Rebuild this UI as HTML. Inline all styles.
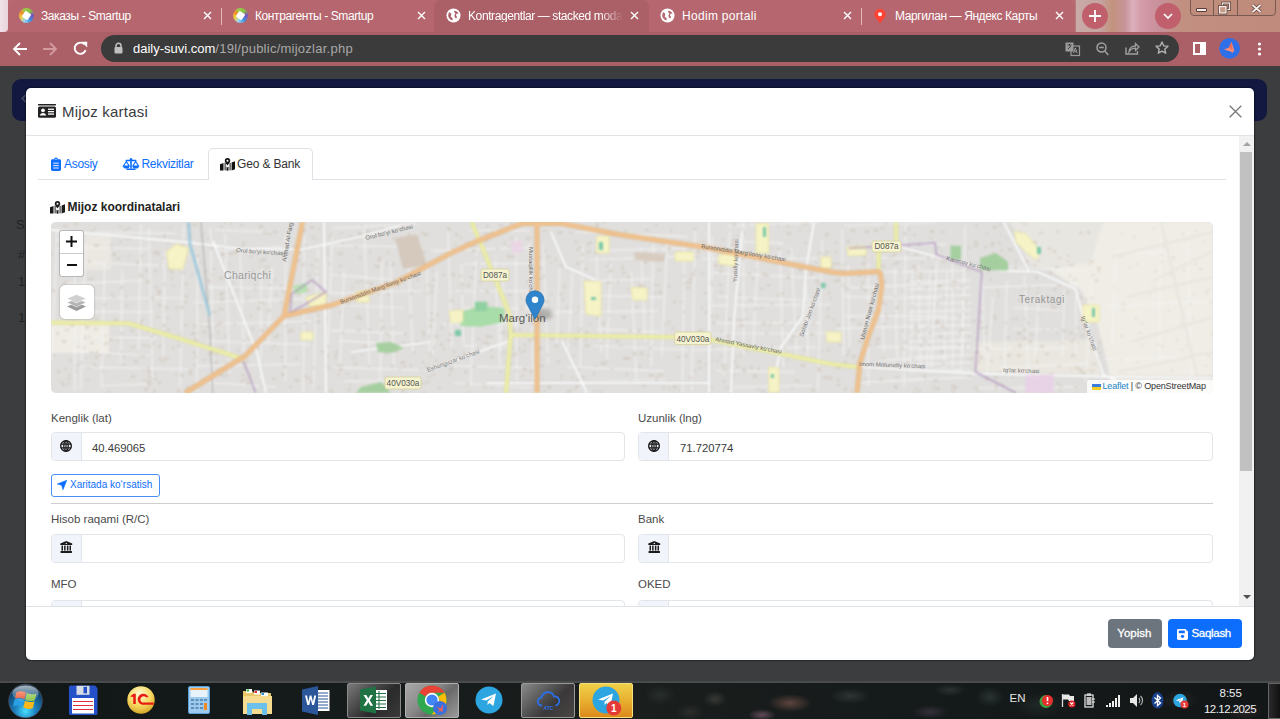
<!DOCTYPE html>
<html><head><meta charset="utf-8">
<style>
*{box-sizing:border-box;margin:0;padding:0}
html,body{width:1280px;height:719px;overflow:hidden;background:#3c3d3f;font-family:"Liberation Sans",sans-serif;position:relative}
.a{position:absolute}
.tx{position:absolute;white-space:nowrap;line-height:1}
svg{position:absolute;overflow:visible}
/* chrome */
#tabstrip{left:8px;top:0;width:1067px;height:32px;background:#b5666e;border-radius:10px 10px 0 0}
#theme{left:0;top:0;width:1280px;height:32px;background:linear-gradient(90deg,#b86a72 0%,#b86a72 84%,#c8aaa8 84.1%,#c6a4a0 85.9%,#c2927e 86.9%,#c8949a 87.9%,#dcb0bc 88.5%,#d49aa8 89.2%,#c8909a 90.6%,#c29080 92.2%,#c08a7c 100%)}
#toolbar{left:0;top:32px;width:1280px;height:34px;background:#ab6068}
.tabt{color:#fff;font-size:12px;letter-spacing:-0.4px}
#omni{left:101px;top:35px;width:1078px;height:27px;border-radius:14px;background:#3b3b3b}
/* page */
#navy{left:12px;top:79px;width:1255px;height:42px;border-radius:9px;background:#121840}
/* modal */
#modal{left:26px;top:88px;width:1228px;height:572px;background:#fff;border-radius:5px;overflow:hidden;box-shadow:0 0 0 1px rgba(0,0,0,.22),0 0 0 2px rgba(0,0,0,.08)}
#taskbar{left:0;top:683px;width:1280px;height:36px;background:linear-gradient(90deg,#111617 0%,#161b1b 30%,#1a1e1d 50%,#151a1a 70%,#121617 100%)}
.lbl{font-size:11.5px;color:#4a4a4a}
.val{font-size:11.3px;color:#3a3a3a}
.ig{position:absolute;height:29px;border:1px solid #e2e5e9;border-radius:4px;background:#fff;overflow:hidden}
.ig .ad{position:absolute;left:0;top:0;width:30px;height:27px;background:#f1f4fb;border-right:1px solid #e2e5e9}
</style></head><body>
<!-- ============ CHROME ============ -->
<div id="theme" class="a"></div>
<div class="a" style="left:0;top:0;width:8px;height:31.5px;background:linear-gradient(90deg,#f0e2e8,#e8d4da);border-radius:0 0 4px 0"></div>
<div id="tabstrip" class="a"></div>
<div id="toolbar" class="a"></div>
<!-- active tab (3) -->
<div class="a" style="left:434px;top:0;width:215px;height:32px;background:#ab6068;border-radius:7px 7px 0 0"></div>
<!-- separators -->
<div class="a" style="left:221px;top:8px;width:1px;height:17px;background:#e0b8bc"></div>
<div class="a" style="left:861px;top:8px;width:1px;height:17px;background:#e0b8bc"></div>

<!-- tab1 -->
<div class="a" style="left:18.5px;top:8px;width:15px;height:15px;border-radius:50%;background:conic-gradient(from -20deg,#9acd4a 0deg,#8ac040 60deg,#7a50c0 110deg,#3d8ee0 160deg,#9ad4f5 220deg,#f0d040 270deg,#f08a2a 320deg,#9acd4a 360deg)"></div><div class="a" style="left:22.5px;top:12px;width:7px;height:7px;background:#fff;transform:rotate(35deg);border-radius:1px"></div>
<div class="tx tabt" style="left:41px;top:10px">Заказы - Smartup</div>
<svg style="left:203px;top:11px" width="9" height="9" viewBox="0 0 9 9"><path d="M1 1l7 7M8 1L1 8" stroke="#fff" stroke-width="1.4"/></svg>
<!-- tab2 -->
<div class="a" style="left:232.5px;top:8px;width:15px;height:15px;border-radius:50%;background:conic-gradient(from -20deg,#9acd4a 0deg,#8ac040 60deg,#7a50c0 110deg,#3d8ee0 160deg,#9ad4f5 220deg,#f0d040 270deg,#f08a2a 320deg,#9acd4a 360deg)"></div><div class="a" style="left:236.5px;top:12px;width:7px;height:7px;background:#fff;transform:rotate(35deg);border-radius:1px"></div>
<div class="tx tabt" style="left:255px;top:10px">Контрагенты - Smartup</div>
<svg style="left:417px;top:11px" width="9" height="9" viewBox="0 0 9 9"><path d="M1 1l7 7M8 1L1 8" stroke="#fff" stroke-width="1.4"/></svg>
<!-- tab3 -->
<svg style="left:446px;top:8px" width="15" height="15" viewBox="0 0 16 16">
 <circle cx="8" cy="8" r="7.5" fill="#fff"/>
 <path d="M3.2 4.5c1.2.3 2.2 1 2.4 2.1.2 1-.8 1.5-.4 2.6.4.9 1.6.8 1.9 1.8.2.7-.1 1.6-.4 2.2-2.2-.6-3.9-2.5-4.4-4.8.1-1.4.4-2.8.9-3.9zM9.6 2.8c1.6.4 3 1.4 3.8 2.8-.9.7-2.2.4-2.7 1.4-.4 1 .8 1.7.9 2.7.1.7-.4 1.4-1.1 1.6-.6-1-1.5-1.8-1.5-3.1 0-1.1 1.1-1.6.8-2.6-.3-.9-1.2-1-1.4-1.8.3-.5.7-.8 1.2-1z" fill="#ab6068"/>
</svg>
<div class="tx tabt" style="left:468px;top:10px;width:155px;overflow:hidden;-webkit-mask-image:linear-gradient(90deg,#000 85%,transparent)">Kontragentlar — stacked modal</div>
<svg style="left:630px;top:11px" width="9" height="9" viewBox="0 0 9 9"><path d="M1 1l7 7M8 1L1 8" stroke="#fff" stroke-width="1.4"/></svg>
<!-- tab4 -->
<svg style="left:660px;top:8px" width="15" height="15" viewBox="0 0 16 16">
 <circle cx="8" cy="8" r="7.5" fill="#fff"/>
 <path d="M3.2 4.5c1.2.3 2.2 1 2.4 2.1.2 1-.8 1.5-.4 2.6.4.9 1.6.8 1.9 1.8.2.7-.1 1.6-.4 2.2-2.2-.6-3.9-2.5-4.4-4.8.1-1.4.4-2.8.9-3.9zM9.6 2.8c1.6.4 3 1.4 3.8 2.8-.9.7-2.2.4-2.7 1.4-.4 1 .8 1.7.9 2.7.1.7-.4 1.4-1.1 1.6-.6-1-1.5-1.8-1.5-3.1 0-1.1 1.1-1.6.8-2.6-.3-.9-1.2-1-1.4-1.8.3-.5.7-.8 1.2-1z" fill="#b5666e"/>
</svg>
<div class="tx tabt" style="left:682px;top:10px;letter-spacing:0.3px">Hodim portali</div>
<svg style="left:843px;top:11px" width="9" height="9" viewBox="0 0 9 9"><path d="M1 1l7 7M8 1L1 8" stroke="#fff" stroke-width="1.4"/></svg>
<!-- tab5 -->
<svg style="left:873px;top:8px" width="14" height="16" viewBox="0 0 14 16">
 <path d="M7 .8a5.6 5.6 0 0 0-5.6 5.6c0 3.2 3.6 5.8 5.6 9 2-3.2 5.6-5.8 5.6-9A5.6 5.6 0 0 0 7 .8z" fill="#f43" />
 <circle cx="7" cy="6.3" r="2" fill="#fff"/>
</svg>
<div class="tx tabt" style="left:895px;top:10px">Маргилан — Яндекс Карты</div>
<svg style="left:1055px;top:11px" width="9" height="9" viewBox="0 0 9 9"><path d="M1 1l7 7M8 1L1 8" stroke="#fff" stroke-width="1.4"/></svg>
<!-- new tab + dropdown -->
<div class="a" style="left:1082px;top:3px;width:26px;height:26px;border-radius:13px;background:#c0606c"></div>
<svg style="left:1089px;top:10px" width="12" height="12" viewBox="0 0 12 12"><path d="M6 0v12M0 6h12" stroke="#fff" stroke-width="1.8"/></svg>
<div class="a" style="left:1155px;top:3px;width:26px;height:26px;border-radius:13px;background:#c0606c"></div>
<svg style="left:1163px;top:13px" width="10" height="6" viewBox="0 0 10 6"><path d="M1 1l4 4 4-4" stroke="#fff" stroke-width="1.6" fill="none"/></svg>
<!-- window controls -->
<div class="a" style="left:1189.5px;top:-3px;width:86px;height:18.5px;border:1px solid #7a5a50;border-radius:0 0 4px 4px;background:rgba(190,140,120,.3)"></div>
<div class="a" style="left:1213px;top:0;width:1px;height:15px;background:#7a5a50"></div>
<div class="a" style="left:1236.5px;top:0;width:1px;height:15px;background:#7a5a50"></div>
<div class="a" style="left:1196px;top:7.5px;width:11px;height:4px;background:#f4ece8;border:1px solid #5a3a34;border-radius:1px"></div>
<svg style="left:1218px;top:2px" width="13" height="12" viewBox="0 0 13 12"><rect x="4.5" y="1" width="7" height="6.5" fill="none" stroke="#4a302a" stroke-width="2.6"/><rect x="4.5" y="1" width="7" height="6.5" fill="none" stroke="#f4ece8" stroke-width="1.3"/><rect x="1.5" y="4.5" width="6.5" height="6.5" fill="#c89a88" stroke="#4a302a" stroke-width="2.6"/><rect x="1.5" y="4.5" width="6.5" height="6.5" fill="#c89a88" stroke="#f4ece8" stroke-width="1.3"/></svg>
<svg style="left:1251px;top:3.5px" width="11" height="9" viewBox="0 0 11 9"><path d="M1.5 1l8 7M9.5 1l-8 7" stroke="#5a3a34" stroke-width="3.4"/><path d="M1.5 1l8 7M9.5 1l-8 7" stroke="#f4ece8" stroke-width="2"/></svg>

<!-- toolbar icons -->
<svg style="left:12px;top:41px" width="16" height="16" viewBox="0 0 16 16"><path d="M15 8H2.5M8 2L2 8l6 6" stroke="#fff" stroke-width="1.8" fill="none"/></svg>
<svg style="left:42px;top:41px" width="16" height="16" viewBox="0 0 16 16"><path d="M1 8h12.5M8 2l6 6-6 6" stroke="#d39aa0" stroke-width="1.8" fill="none"/></svg>
<svg style="left:73px;top:41px" width="15" height="15" viewBox="0 0 15 15"><path d="M12.6 9.2A5.6 5.6 0 1 1 11.3 3.3" stroke="#fff" stroke-width="1.9" fill="none"/><path d="M8.6 .8h5.6v5.6z" fill="#fff"/></svg>
<div id="omni" class="a"></div>
<svg style="left:114px;top:42px" width="9" height="12" viewBox="0 0 9 12"><path d="M2 5.5V3.8a2.5 2.5 0 0 1 5 0v1.7" stroke="#c0c0c0" stroke-width="1.5" fill="none"/><rect x="0.5" y="5" width="8" height="6.5" rx="1" fill="#c0c0c0"/></svg>
<div class="tx" style="left:133px;top:42px;font-size:13px;color:#fff">daily-suvi.com<span style="color:#a9a9a9;letter-spacing:.25px">/19l/public/mijozlar.php</span></div>
<!-- right omnibox icons -->
<svg style="left:1065px;top:42px" width="15" height="14" viewBox="0 0 15 14"><rect x="0.5" y="0.5" width="8" height="9" fill="#9a9a9a"/><rect x="6" y="4" width="8.5" height="9.5" fill="none" stroke="#9a9a9a" stroke-width="1.2"/><path d="M2.5 3h4M4.5 2v1.5M3 7l3-3" stroke="#3b3b3b" stroke-width="1"/><path d="M8.5 11l1.8-5 1.8 5M9.2 9.3h2.3" stroke="#9a9a9a" stroke-width="1" fill="none"/></svg>
<svg style="left:1096px;top:42px" width="13" height="14" viewBox="0 0 13 14"><circle cx="5.5" cy="5.5" r="4.5" stroke="#a0a0a0" stroke-width="1.5" fill="none"/><path d="M3.2 5.5h4.6M8.8 9l3.5 4" stroke="#a0a0a0" stroke-width="1.5"/></svg>
<svg style="left:1125px;top:42px" width="15" height="13" viewBox="0 0 15 13"><path d="M1 5.5V12h11.5V9" stroke="#a0a0a0" stroke-width="1.4" fill="none"/><path d="M4 10c0-4 3-6 6.5-6V1.5L14 5l-3.5 3.5V6.2C7.5 6.2 5.5 7.5 4 10z" stroke="#a0a0a0" stroke-width="1.3" fill="none"/></svg>
<svg style="left:1155px;top:41px" width="14" height="14" viewBox="0 0 14 14"><path d="M7 1l1.8 3.9 4.2.4-3.2 2.8.9 4.1L7 10.1 3.3 12.2l.9-4.1L1 5.3l4.2-.4z" stroke="#b0b0b0" stroke-width="1.4" fill="none" stroke-linejoin="round"/></svg>
<svg style="left:1193px;top:42px" width="13" height="13" viewBox="0 0 13 13"><rect x="1" y="1" width="11" height="11" fill="none" stroke="#fff" stroke-width="2"/><rect x="7" y="1" width="5" height="11" fill="#fff"/></svg>
<svg style="left:1219px;top:38px" width="21" height="21" viewBox="0 0 21 21"><circle cx="10.6" cy="10.4" r="10.4" fill="#2f6fe8"/><path d="M12.5 3.8L10 9.5 5 11.6l6.5 1.9 2.2 1.2 1.6-2.3z" fill="#f58a78"/><path d="M12.5 3.8L10 9.5l3.5 2.5z" fill="#ee6a5a"/></svg>
<svg style="left:1257px;top:42px" width="5" height="14" viewBox="0 0 5 14"><circle cx="2.5" cy="2" r="1.6" fill="#fff"/><circle cx="2.5" cy="7" r="1.6" fill="#fff"/><circle cx="2.5" cy="12" r="1.6" fill="#fff"/></svg>

<!-- ============ PAGE (behind backdrop) ============ -->
<div id="navy" class="a"></div>
<svg style="left:21px;top:93.5px" width="6" height="9" viewBox="0 0 6 9"><path d="M5 .8L1.2 4.5 5 8.2" stroke="#4a4e64" stroke-width="1.6" fill="none"/></svg>
<div class="tx" style="left:16px;top:218px;font-size:13px;color:#222">S</div>
<div class="tx" style="left:18px;top:248px;font-size:13px;color:#222">#</div>
<div class="tx" style="left:18px;top:275px;font-size:13px;color:#222">1</div>
<div class="tx" style="left:18px;top:311px;font-size:13px;color:#222">1</div>

<!-- ============ MODAL ============ -->

<div id="modal" class="a"></div>
<!-- header -->
<svg style="left:38px;top:104px" width="18" height="14" viewBox="0 0 18 14">
 <rect x="0" y="0" width="18" height="1.6" rx=".5" fill="#222"/>
 <rect x="0" y="2.6" width="18" height="11.2" rx="1.6" fill="#222"/>
 <circle cx="5" cy="6.3" r="1.9" fill="#fff"/>
 <path d="M1.8 11.6c.3-1.7 1.6-2.6 3.2-2.6s2.9.9 3.2 2.6z" fill="#fff"/>
 <rect x="10" y="4.6" width="6" height="1.3" fill="#fff"/><rect x="10" y="7" width="6" height="1.3" fill="#fff"/><rect x="10" y="9.4" width="6" height="1.3" fill="#fff"/>
</svg>
<div class="tx" style="left:62px;top:104.2px;font-size:15px;letter-spacing:.2px;color:#3a3b3c">Mijoz kartasi</div>
<svg style="left:1229px;top:105px" width="13" height="13" viewBox="0 0 13 13"><path d="M.7 .7l11.6 11.6M12.3 .7L.7 12.3" stroke="#767676" stroke-width="1.3"/></svg>
<div class="a" style="left:26px;top:135px;width:1228px;height:1px;background:#dfe3e8"></div>

<!-- scroll body clip -->
<div class="a" style="left:0;top:0;width:1280px;height:719px;clip-path:inset(136px 41px 113px 26px)">
 <!-- nav tabs -->
 <div class="a" style="left:38px;top:179px;width:1188px;height:1px;background:#dee2e6"></div>
 <div class="a" style="left:207.5px;top:148px;width:105px;height:32px;background:#fff;border:1px solid #dee2e6;border-bottom:0;border-radius:5px 5px 0 0"></div>
 <svg style="left:51px;top:157.5px" width="10" height="13" viewBox="0 0 10 13"><path d="M3.2 1.2a1.8 1.8 0 0 1 3.6 0H8.6A1.4 1.4 0 0 1 10 2.6v9A1.4 1.4 0 0 1 8.6 13H1.4A1.4 1.4 0 0 1 0 11.6v-9A1.4 1.4 0 0 1 1.4 1.2z" fill="#0d6efd"/><path d="M2.2 5.2h5.6M2.2 7.6h5.6M2.2 10h5.6" stroke="#fff" stroke-width=".9"/><circle cx="5" cy="1.4" r=".6" fill="#fff"/></svg>
 <div class="tx" style="left:64px;top:158.3px;font-size:12px;letter-spacing:-.3px;color:#0d6efd">Asosiy</div>
 <svg style="left:123px;top:158px" width="16" height="12" viewBox="0 0 16 12"><rect x="7.2" y="1.5" width="1.6" height="9" fill="#0d6efd"/><rect x="2.5" y="1.8" width="11" height="1.5" rx=".7" fill="#0d6efd"/><circle cx="8" cy="1.2" r="1.2" fill="#0d6efd"/><rect x="3.5" y="10.5" width="9" height="1.5" rx=".5" fill="#0d6efd"/><path d="M3.3 3.5L.4 8h5.8zM12.7 3.5L9.8 8h5.8z" fill="none" stroke="#0d6efd" stroke-width="1.1"/><path d="M.2 8h6.2a3.1 2.6 0 0 1-6.2 0zM9.6 8h6.2a3.1 2.6 0 0 1-6.2 0z" fill="#0d6efd"/></svg>
 <div class="tx" style="left:141.5px;top:158.3px;font-size:12px;letter-spacing:-.3px;color:#0d6efd">Rekvizitlar</div>
 <svg style="left:219.5px;top:157.5px" width="15" height="12.5" viewBox="0 0 15 12.5"><path d="M0 6.2l3.5-1.3v7.6L0 12.5zM4.6 4.6l1 .3v7.6l-1-.3zM9.6 5l1-.3v7.5l-1 .3zM11.6 4.5L15 3.3v7.9l-3.4 1.3z" fill="#111"/><path d="M7.5 0a2.7 2.7 0 0 0-2.7 2.7c0 1.8 2.7 4.6 2.7 4.6s2.7-2.8 2.7-4.6A2.7 2.7 0 0 0 7.5 0z" fill="#111"/><circle cx="7.5" cy="2.7" r="1" fill="#fff"/><path d="M6.5 8.5l1 1 1-1v4l-1 .3-1-.3z" fill="#111"/></svg>
 <div class="tx" style="left:237px;top:158.4px;font-size:12px;letter-spacing:-.15px;color:#333">Geo &amp; Bank</div>

 <!-- section title -->
 <svg style="left:50px;top:200.5px" width="15" height="12.5" viewBox="0 0 15 12.5"><path d="M0 6.2l3.5-1.3v7.6L0 12.5zM4.6 4.6l1 .3v7.6l-1-.3zM9.6 5l1-.3v7.5l-1 .3zM11.6 4.5L15 3.3v7.9l-3.4 1.3z" fill="#1a1a1a"/><path d="M7.5 0a2.7 2.7 0 0 0-2.7 2.7c0 1.8 2.7 4.6 2.7 4.6s2.7-2.8 2.7-4.6A2.7 2.7 0 0 0 7.5 0z" fill="#1a1a1a"/><circle cx="7.5" cy="2.7" r="1" fill="#fff"/><path d="M6.5 8.5l1 1 1-1v4l-1 .3-1-.3z" fill="#1a1a1a"/></svg>
 <div class="tx" style="left:67.4px;top:201.2px;font-size:12px;font-weight:bold;color:#222">Mijoz koordinatalari</div>

 <!-- MAP -->
 <div class="a" id="map" style="left:51px;top:222px;width:1162px;height:171px;border-radius:5px;overflow:hidden;background:#e0dfdd">
<div class="a" style="left:0;top:0;width:1162px;height:171px;filter:blur(.8px)"><svg style="left:0;top:0" width="1162" height="171" viewBox="0 0 1162 171">
<defs><filter id="bl" x="-50%" y="-50%" width="200%" height="200%"><feGaussianBlur stdDeviation="2"/></filter></defs>
<rect width="1162" height="171" fill="#e0dfdd"/>
<path d="M1052.0 0.0 L1162.0 0.0 L1162.0 171.0 L1062.0 171.0 L1055.0 135.0 L1046.0 100.0 L1030.0 68.0 L1005.0 52.0 L985.0 40.0 L965.0 10.0 L960.0 0.0Z" fill="#f0ede6"/>
<path d="M960.0 0.0 L1052.0 0.0 L1040.0 40.0 L1000.0 48.0 L978.0 42.0Z" fill="#e8e6e1"/>
<path d="M924.0 120.0 L1045.0 118.0 L1052.0 153.0 L924.0 152.0Z" fill="#eae7e0"/>
<path d="M0.0 103.0 L58.0 103.0 L58.0 131.0 L0.0 131.0Z" fill="#efece5"/>
<path d="M34.0 9.0 L60.0 9.0 L60.0 48.0 L34.0 48.0Z" fill="#ebe8e2"/>
<path d="M6.1 7.7L1.0 137.6M23.7 18.8L23.8 168.0M34.6 22.2L29.7 167.4M53.7 42.4L50.4 164.6M71.2 48.6L69.9 141.4M90.0 2.4L87.5 127.0M97.8 6.0L101.6 155.2M113.7 29.8L112.2 138.2M132.7 3.2L129.1 167.9M21.0 10.4L124.6 11.3M14.7 25.2L101.1 27.2M28.1 40.1L114.3 43.9M14.1 62.2L92.0 58.4M37.1 76.1L132.6 76.0M32.7 89.3L102.5 90.1M15.4 115.0L105.9 115.9M22.4 129.1L98.8 133.5M32.5 145.1L137.0 147.1M48.7 164.0L99.7 161.8" stroke="#f4f4f4" stroke-width="1.2" fill="none" opacity="0.9"/>
<path d="M146.5 34.3L146.0 169.8M159.5 6.0L162.7 168.0M174.2 12.7L178.6 150.9M188.7 23.0L193.3 142.8M210.4 44.3L209.4 156.7M221.2 45.4L217.0 121.9M234.6 11.9L234.4 159.0M253.3 13.5L252.3 170.8M163.8 8.0L220.0 9.9M165.9 28.7L231.6 24.2M172.8 52.1L223.3 55.0M156.8 65.3L255.7 66.6M142.8 80.5L251.2 77.1M142.2 102.7L260.0 99.2M155.3 119.0L258.9 122.7M146.2 143.8L249.4 142.3M145.2 160.0L224.3 164.9" stroke="#f4f4f4" stroke-width="1.2" fill="none" opacity="0.9"/>
<path d="M267.2 24.8L262.4 166.6M281.1 13.6L277.0 128.5M293.2 48.8L289.0 143.9M312.9 1.4L318.6 143.9M330.8 35.7L329.2 157.6M339.5 39.6L342.9 143.7M356.0 11.4L361.8 129.4M375.7 41.4L378.6 129.0M281.7 6.4L365.1 1.7M271.7 23.1L369.1 25.0M278.8 52.7L340.6 57.6M275.3 71.7L370.7 69.0M268.6 82.0L353.8 86.0M280.1 108.4L352.6 111.4M287.7 118.8L341.8 121.6M280.1 145.4L372.5 148.2M293.6 159.6L339.2 158.5" stroke="#f4f4f4" stroke-width="1.2" fill="none" opacity="0.9"/>
<path d="M385.9 48.6L381.9 133.8M397.0 7.8L400.7 124.6M410.5 42.4L412.4 120.7M425.5 28.1L419.6 164.3M443.8 33.3L449.0 144.0M452.8 44.7L449.3 128.6M464.7 15.0L465.7 158.7M478.1 21.5L483.0 164.3M492.2 23.5L497.0 141.1M418.5 8.6L478.9 8.9M380.8 28.8L481.5 25.6M413.6 41.8L492.8 41.6M403.4 69.1L486.3 69.3M412.9 86.1L495.5 86.7M391.6 101.6L467.6 101.7M411.9 124.2L461.7 123.6M401.2 143.8L478.5 145.7M402.4 161.0L479.9 165.4" stroke="#f4f4f4" stroke-width="1.2" fill="none" opacity="0.9"/>
<path d="M508.7 45.0L505.8 122.7M521.5 48.4L517.1 127.9M531.8 22.7L528.7 167.3M545.4 34.3L550.2 130.8M560.1 36.7L555.8 137.1M580.2 49.6L585.6 159.7M590.1 25.0L594.1 120.2M602.2 22.1L600.2 144.5M616.4 16.3L610.7 134.0M633.5 22.6L631.4 170.1M525.1 9.8L636.8 14.7M547.6 28.6L634.9 26.3M538.2 38.0L626.7 34.3M544.7 59.1L599.9 56.6M545.0 73.4L612.0 75.4M502.8 89.8L606.3 89.1M546.0 106.8L608.9 109.8M542.0 124.0L636.7 127.6M516.6 144.9L612.9 149.1M506.3 160.1L614.2 157.5" stroke="#f4f4f4" stroke-width="1.2" fill="none" opacity="0.9"/>
<path d="M644.1 8.3L640.6 168.4M661.6 15.6L659.1 132.0M678.9 9.1L673.1 153.2M692.1 0.8L692.7 133.4M707.1 24.4L702.4 123.1M728.5 22.2L732.5 145.6M740.1 26.0L745.9 135.7M755.2 42.7L756.8 134.7M771.3 17.8L766.9 168.2M676.3 3.8L767.5 0.4M681.2 19.4L737.3 21.1M651.9 36.8L765.6 36.4M661.8 51.2L767.1 55.8M666.8 74.4L768.0 79.0M657.5 83.7L779.9 82.5M664.6 100.8L770.2 100.9M652.9 112.0L775.6 111.0M641.1 127.9L765.1 125.2M665.9 148.5L743.2 150.1M683.1 165.2L760.9 163.5" stroke="#f4f4f4" stroke-width="1.2" fill="none" opacity="0.9"/>
<path d="M791.1 7.7L792.8 133.9M797.2 42.9L798.7 125.2M817.0 41.7L817.2 163.9M829.0 42.8L833.0 129.7M843.7 45.8L846.0 136.0M854.7 1.6L853.1 164.2M867.7 42.9L869.2 142.3M886.1 34.9L880.1 145.9M901.5 38.4L901.9 145.2M914.3 3.4L911.4 133.2M793.0 3.5L884.3 0.5M827.8 23.4L895.8 22.3M813.5 35.4L882.4 36.6M783.8 51.1L912.8 48.6M794.9 66.2L892.2 61.3M793.2 74.6L887.1 76.5M794.3 94.1L894.7 93.8M785.8 106.6L876.2 103.6M825.9 125.2L919.1 124.8M827.4 138.1L898.0 135.8M826.3 147.1L909.7 148.0M805.7 160.8L873.3 157.1" stroke="#f4f4f4" stroke-width="1.2" fill="none" opacity="0.9"/>
<path d="M931.2 60.0L933.7 136.1M941.8 75.3L936.1 151.9M955.8 59.3L953.4 153.3M973.4 53.5L977.5 158.6M988.3 69.5L983.7 138.0M1013.5 68.0L1011.0 135.6M1024.4 55.4L1025.4 131.7M1040.5 56.8L1035.1 160.2M958.0 44.9L1037.0 49.2M932.1 65.3L1026.8 62.2M963.5 85.4L1009.8 88.5M961.6 107.0L1007.2 107.5M922.3 126.7L1016.7 126.2M949.3 145.8L1037.0 141.3M925.8 166.4L1028.5 164.9" stroke="#f4f4f4" stroke-width="1.2" fill="none" opacity="0.9"/>
<path d="M1064.1 37.9L1061.3 120.9M1109.5 15.4L1108.2 142.4M1135.9 8.3L1140.8 160.3M1058.6 28.4L1126.5 33.4M1055.5 83.8L1154.5 79.7M1053.6 137.1L1152.6 134.7" stroke="#f4f4f4" stroke-width="1.2" fill="none" opacity="0.9"/>
<path d="M858 60.0L920 58.0M858 67.5L920 65.5M858 75.0L920 73.0M858 82.5L920 80.5M858 90.0L920 88.0M858 97.5L920 95.5M858 105.0L920 103.0M858 112.5L920 110.5M858 120.0L920 118.0M858 127.5L920 125.5M858 135.0L920 133.0M858 142.5L920 140.5M858 150.0L920 148.0M858 157.5L920 155.5" stroke="#f6f6f6" stroke-width="1.1" fill="none"/>
<path d="M862.0 50L859.0 150M879.0 50L876.0 150M896.0 50L893.0 150M913.0 50L910.0 150" stroke="#f6f6f6" stroke-width="1" fill="none" opacity=".8"/>
<g fill="#c9b8aa" opacity=".4"><rect x="598" y="152" width="4" height="3"/><rect x="402" y="128" width="2" height="3"/><rect x="284" y="129" width="3" height="3"/><rect x="603" y="62" width="4" height="2"/><rect x="97" y="153" width="3" height="3"/><rect x="678" y="74" width="3" height="2"/><rect x="134" y="73" width="3" height="3"/><rect x="0" y="67" width="4" height="3"/><rect x="1021" y="42" width="2" height="2"/><rect x="162" y="89" width="4" height="2"/><rect x="989" y="123" width="4" height="3"/><rect x="89" y="133" width="2" height="2"/><rect x="244" y="157" width="4" height="3"/><rect x="1011" y="107" width="4" height="3"/><rect x="734" y="19" width="2" height="3"/><rect x="551" y="100" width="3" height="3"/><rect x="235" y="103" width="2" height="3"/><rect x="1046" y="48" width="3" height="2"/><rect x="499" y="40" width="2" height="2"/><rect x="1009" y="120" width="3" height="2"/><rect x="23" y="85" width="4" height="3"/><rect x="85" y="39" width="3" height="3"/><rect x="238" y="6" width="3" height="3"/><rect x="380" y="68" width="2" height="3"/><rect x="776" y="86" width="2" height="3"/><rect x="1018" y="53" width="2" height="2"/><rect x="488" y="45" width="3" height="2"/><rect x="1000" y="85" width="2" height="2"/><rect x="509" y="156" width="2" height="2"/><rect x="968" y="9" width="2" height="2"/><rect x="436" y="121" width="2" height="3"/><rect x="472" y="122" width="3" height="2"/><rect x="1047" y="159" width="3" height="2"/><rect x="195" y="160" width="4" height="3"/><rect x="33" y="114" width="3" height="3"/><rect x="1034" y="76" width="2" height="2"/><rect x="82" y="14" width="3" height="2"/><rect x="589" y="130" width="3" height="3"/><rect x="807" y="53" width="3" height="2"/><rect x="52" y="81" width="3" height="3"/><rect x="203" y="62" width="3" height="2"/><rect x="663" y="42" width="4" height="3"/><rect x="43" y="6" width="2" height="2"/><rect x="270" y="128" width="4" height="3"/><rect x="381" y="57" width="4" height="2"/><rect x="275" y="123" width="3" height="3"/><rect x="312" y="123" width="4" height="2"/><rect x="25" y="40" width="3" height="3"/><rect x="1002" y="66" width="3" height="3"/><rect x="856" y="23" width="3" height="2"/><rect x="9" y="159" width="3" height="2"/><rect x="638" y="56" width="3" height="3"/><rect x="380" y="134" width="2" height="2"/><rect x="411" y="27" width="3" height="2"/><rect x="682" y="82" width="4" height="3"/><rect x="169" y="73" width="2" height="2"/><rect x="278" y="14" width="2" height="3"/><rect x="523" y="121" width="3" height="2"/><rect x="246" y="71" width="4" height="2"/><rect x="785" y="145" width="4" height="2"/><rect x="819" y="50" width="3" height="3"/><rect x="392" y="126" width="2" height="3"/><rect x="260" y="42" width="2" height="3"/><rect x="928" y="99" width="3" height="2"/><rect x="416" y="170" width="4" height="2"/><rect x="682" y="17" width="3" height="2"/><rect x="107" y="81" width="2" height="3"/><rect x="960" y="7" width="3" height="2"/><rect x="125" y="32" width="4" height="2"/><rect x="977" y="64" width="2" height="3"/><rect x="633" y="133" width="4" height="2"/><rect x="111" y="102" width="4" height="3"/><rect x="229" y="63" width="2" height="2"/><rect x="214" y="44" width="4" height="2"/><rect x="855" y="140" width="3" height="3"/><rect x="194" y="53" width="2" height="2"/><rect x="835" y="94" width="2" height="3"/><rect x="106" y="68" width="4" height="2"/><rect x="671" y="16" width="2" height="3"/><rect x="730" y="70" width="3" height="3"/><rect x="439" y="9" width="4" height="3"/><rect x="435" y="3" width="3" height="2"/><rect x="410" y="69" width="2" height="3"/><rect x="947" y="72" width="2" height="3"/><rect x="607" y="62" width="2" height="2"/><rect x="16" y="94" width="4" height="3"/><rect x="93" y="106" width="3" height="2"/><rect x="153" y="48" width="4" height="2"/><rect x="972" y="19" width="3" height="2"/><rect x="317" y="143" width="2" height="3"/><rect x="330" y="104" width="4" height="3"/><rect x="91" y="122" width="4" height="2"/><rect x="672" y="146" width="4" height="3"/><rect x="645" y="34" width="3" height="2"/><rect x="594" y="7" width="4" height="2"/><rect x="403" y="21" width="2" height="2"/><rect x="43" y="96" width="4" height="2"/><rect x="701" y="55" width="3" height="3"/><rect x="578" y="107" width="3" height="3"/><rect x="324" y="43" width="3" height="3"/><rect x="469" y="75" width="2" height="2"/><rect x="650" y="84" width="2" height="3"/><rect x="802" y="133" width="3" height="2"/><rect x="851" y="68" width="2" height="2"/><rect x="377" y="62" width="3" height="2"/><rect x="43" y="22" width="4" height="3"/><rect x="817" y="87" width="2" height="3"/><rect x="685" y="134" width="2" height="2"/><rect x="1046" y="125" width="2" height="2"/><rect x="138" y="151" width="3" height="2"/><rect x="720" y="123" width="2" height="2"/><rect x="875" y="104" width="3" height="2"/><rect x="340" y="105" width="3" height="2"/><rect x="267" y="165" width="3" height="2"/><rect x="621" y="105" width="2" height="3"/><rect x="391" y="34" width="3" height="2"/><rect x="668" y="48" width="3" height="3"/><rect x="177" y="134" width="2" height="2"/><rect x="668" y="62" width="3" height="2"/><rect x="265" y="92" width="3" height="3"/><rect x="278" y="169" width="4" height="2"/><rect x="378" y="131" width="3" height="2"/><rect x="186" y="127" width="2" height="3"/><rect x="861" y="43" width="4" height="3"/><rect x="770" y="128" width="2" height="2"/><rect x="306" y="107" width="3" height="3"/><rect x="940" y="23" width="2" height="2"/><rect x="23" y="0" width="3" height="3"/><rect x="112" y="61" width="2" height="3"/><rect x="613" y="101" width="2" height="3"/><rect x="655" y="81" width="2" height="2"/><rect x="983" y="42" width="2" height="3"/><rect x="101" y="109" width="4" height="3"/><rect x="422" y="45" width="2" height="2"/><rect x="677" y="96" width="3" height="3"/><rect x="632" y="89" width="3" height="2"/><rect x="173" y="0" width="2" height="2"/><rect x="426" y="41" width="2" height="2"/><rect x="13" y="94" width="2" height="2"/><rect x="434" y="89" width="4" height="3"/><rect x="854" y="30" width="3" height="2"/><rect x="315" y="8" width="4" height="3"/><rect x="751" y="1" width="3" height="3"/><rect x="85" y="112" width="2" height="2"/><rect x="1046" y="45" width="4" height="2"/><rect x="129" y="152" width="4" height="3"/><rect x="747" y="45" width="4" height="3"/><rect x="720" y="157" width="3" height="3"/><rect x="674" y="165" width="2" height="2"/><rect x="924" y="3" width="3" height="2"/><rect x="884" y="35" width="2" height="3"/><rect x="202" y="66" width="4" height="2"/><rect x="398" y="146" width="4" height="3"/><rect x="496" y="91" width="2" height="2"/><rect x="459" y="124" width="4" height="3"/><rect x="829" y="67" width="4" height="2"/><rect x="593" y="29" width="2" height="2"/><rect x="117" y="106" width="2" height="3"/><rect x="1026" y="120" width="2" height="2"/><rect x="145" y="110" width="2" height="2"/><rect x="774" y="11" width="4" height="3"/><rect x="209" y="163" width="4" height="2"/><rect x="924" y="129" width="4" height="3"/><rect x="112" y="35" width="2" height="2"/><rect x="36" y="145" width="4" height="2"/><rect x="866" y="108" width="3" height="3"/><rect x="105" y="17" width="4" height="2"/><rect x="309" y="58" width="3" height="2"/><rect x="368" y="159" width="2" height="3"/><rect x="956" y="132" width="4" height="3"/><rect x="894" y="106" width="2" height="3"/><rect x="33" y="89" width="2" height="3"/><rect x="492" y="8" width="4" height="2"/><rect x="750" y="142" width="4" height="3"/><rect x="179" y="0" width="2" height="3"/><rect x="800" y="167" width="2" height="3"/><rect x="515" y="84" width="2" height="3"/><rect x="622" y="164" width="4" height="3"/><rect x="607" y="27" width="2" height="2"/><rect x="523" y="19" width="4" height="2"/><rect x="515" y="169" width="4" height="2"/><rect x="659" y="61" width="3" height="3"/><rect x="936" y="127" width="3" height="2"/><rect x="391" y="52" width="3" height="2"/><rect x="398" y="151" width="2" height="3"/><rect x="133" y="102" width="4" height="2"/><rect x="366" y="56" width="2" height="3"/><rect x="695" y="127" width="2" height="3"/><rect x="461" y="132" width="4" height="2"/><rect x="132" y="79" width="4" height="2"/><rect x="533" y="46" width="4" height="2"/><rect x="760" y="167" width="4" height="3"/><rect x="633" y="60" width="2" height="3"/><rect x="1004" y="44" width="4" height="2"/><rect x="173" y="113" width="2" height="3"/><rect x="159" y="25" width="3" height="3"/><rect x="457" y="34" width="4" height="2"/><rect x="295" y="151" width="3" height="2"/><rect x="13" y="146" width="3" height="2"/><rect x="526" y="108" width="3" height="2"/><rect x="149" y="103" width="3" height="2"/><rect x="778" y="155" width="3" height="3"/><rect x="888" y="114" width="4" height="2"/><rect x="714" y="110" width="3" height="3"/><rect x="329" y="107" width="2" height="3"/><rect x="255" y="68" width="4" height="2"/><rect x="263" y="72" width="3" height="2"/><rect x="653" y="70" width="4" height="2"/><rect x="939" y="56" width="2" height="3"/><rect x="873" y="155" width="2" height="2"/><rect x="264" y="37" width="4" height="2"/><rect x="545" y="17" width="4" height="3"/><rect x="568" y="123" width="4" height="2"/><rect x="671" y="142" width="4" height="3"/><rect x="431" y="162" width="2" height="2"/><rect x="412" y="130" width="2" height="3"/><rect x="669" y="43" width="3" height="3"/><rect x="65" y="13" width="3" height="3"/><rect x="609" y="19" width="3" height="3"/><rect x="987" y="90" width="2" height="3"/><rect x="485" y="28" width="2" height="2"/><rect x="493" y="96" width="2" height="2"/><rect x="371" y="109" width="3" height="3"/><rect x="1046" y="130" width="4" height="2"/><rect x="819" y="80" width="2" height="3"/><rect x="739" y="118" width="3" height="2"/><rect x="506" y="138" width="3" height="3"/><rect x="257" y="52" width="3" height="3"/><rect x="450" y="109" width="4" height="3"/><rect x="160" y="52" width="3" height="2"/><rect x="90" y="97" width="3" height="2"/><rect x="557" y="59" width="4" height="2"/><rect x="690" y="36" width="2" height="3"/><rect x="263" y="17" width="2" height="2"/><rect x="195" y="77" width="2" height="2"/><rect x="949" y="135" width="2" height="2"/><rect x="702" y="153" width="4" height="3"/><rect x="207" y="118" width="4" height="2"/><rect x="779" y="75" width="2" height="2"/><rect x="278" y="40" width="2" height="3"/><rect x="518" y="10" width="3" height="2"/><rect x="735" y="42" width="2" height="2"/><rect x="168" y="55" width="4" height="3"/><rect x="699" y="144" width="3" height="3"/><rect x="440" y="164" width="2" height="2"/><rect x="669" y="109" width="2" height="2"/><rect x="640" y="117" width="3" height="2"/><rect x="536" y="83" width="2" height="2"/><rect x="224" y="71" width="2" height="3"/><rect x="99" y="113" width="3" height="3"/><rect x="817" y="95" width="2" height="3"/><rect x="457" y="72" width="4" height="2"/><rect x="868" y="50" width="3" height="3"/><rect x="350" y="168" width="4" height="3"/><rect x="1024" y="112" width="2" height="3"/><rect x="202" y="122" width="2" height="2"/><rect x="823" y="7" width="4" height="3"/><rect x="573" y="8" width="3" height="2"/><rect x="7" y="32" width="3" height="2"/><rect x="828" y="156" width="4" height="3"/><rect x="648" y="107" width="4" height="2"/><rect x="223" y="114" width="3" height="2"/><rect x="106" y="31" width="2" height="3"/><rect x="813" y="156" width="4" height="2"/><rect x="387" y="141" width="3" height="3"/><rect x="906" y="32" width="2" height="3"/><rect x="21" y="97" width="4" height="2"/><rect x="523" y="89" width="2" height="3"/><rect x="604" y="157" width="3" height="2"/><rect x="15" y="66" width="4" height="2"/><rect x="499" y="71" width="2" height="2"/><rect x="677" y="36" width="2" height="2"/><rect x="448" y="2" width="4" height="2"/><rect x="1036" y="147" width="2" height="2"/><rect x="135" y="3" width="4" height="2"/><rect x="473" y="127" width="2" height="3"/><rect x="813" y="122" width="2" height="2"/><rect x="308" y="95" width="3" height="3"/><rect x="703" y="152" width="2" height="2"/><rect x="12" y="3" width="4" height="2"/><rect x="408" y="53" width="4" height="2"/><rect x="1006" y="143" width="4" height="2"/><rect x="332" y="162" width="4" height="3"/><rect x="493" y="28" width="2" height="3"/><rect x="1002" y="28" width="3" height="3"/><rect x="405" y="134" width="3" height="3"/><rect x="307" y="10" width="4" height="3"/><rect x="913" y="124" width="2" height="2"/><rect x="631" y="53" width="3" height="2"/><rect x="396" y="117" width="4" height="2"/><rect x="848" y="48" width="2" height="3"/><rect x="276" y="72" width="4" height="2"/><rect x="303" y="24" width="4" height="2"/><rect x="288" y="146" width="4" height="3"/><rect x="364" y="15" width="4" height="3"/><rect x="837" y="34" width="4" height="2"/><rect x="325" y="10" width="3" height="3"/><rect x="744" y="158" width="4" height="2"/><rect x="831" y="79" width="2" height="3"/><rect x="811" y="40" width="4" height="3"/><rect x="929" y="89" width="3" height="2"/><rect x="199" y="33" width="2" height="3"/><rect x="381" y="97" width="3" height="2"/><rect x="259" y="158" width="3" height="3"/><rect x="910" y="64" width="3" height="2"/><rect x="164" y="102" width="3" height="3"/><rect x="545" y="4" width="2" height="2"/><rect x="1040" y="148" width="3" height="2"/><rect x="275" y="133" width="3" height="2"/><rect x="994" y="131" width="4" height="2"/><rect x="267" y="6" width="2" height="2"/><rect x="397" y="5" width="2" height="3"/><rect x="914" y="78" width="2" height="3"/><rect x="968" y="121" width="2" height="3"/><rect x="335" y="40" width="2" height="3"/><rect x="192" y="145" width="3" height="2"/><rect x="1041" y="38" width="2" height="3"/><rect x="988" y="10" width="4" height="2"/><rect x="879" y="8" width="4" height="3"/><rect x="59" y="25" width="2" height="2"/><rect x="711" y="51" width="4" height="3"/><rect x="796" y="18" width="3" height="3"/><rect x="270" y="21" width="3" height="3"/><rect x="177" y="41" width="2" height="2"/><rect x="491" y="156" width="2" height="2"/><rect x="974" y="38" width="4" height="3"/><rect x="933" y="24" width="3" height="2"/><rect x="972" y="66" width="2" height="2"/><rect x="475" y="58" width="2" height="3"/><rect x="121" y="63" width="3" height="2"/><rect x="773" y="31" width="3" height="2"/><rect x="461" y="26" width="3" height="3"/><rect x="259" y="4" width="4" height="3"/><rect x="351" y="29" width="3" height="2"/><rect x="334" y="154" width="2" height="2"/><rect x="1028" y="10" width="4" height="2"/><rect x="588" y="143" width="2" height="3"/><rect x="793" y="166" width="3" height="3"/><rect x="1048" y="158" width="2" height="3"/><rect x="304" y="153" width="2" height="3"/><rect x="152" y="109" width="3" height="3"/><rect x="536" y="76" width="4" height="3"/><rect x="195" y="74" width="3" height="2"/><rect x="291" y="31" width="2" height="2"/><rect x="747" y="34" width="2" height="2"/><rect x="934" y="125" width="3" height="2"/><rect x="216" y="105" width="4" height="2"/><rect x="612" y="35" width="2" height="3"/><rect x="883" y="157" width="4" height="3"/><rect x="352" y="144" width="3" height="2"/><rect x="16" y="156" width="3" height="2"/><rect x="916" y="46" width="2" height="3"/><rect x="39" y="120" width="4" height="2"/><rect x="374" y="159" width="4" height="2"/><rect x="127" y="122" width="3" height="3"/><rect x="605" y="154" width="3" height="2"/><rect x="1002" y="85" width="4" height="2"/><rect x="557" y="92" width="2" height="2"/><rect x="1016" y="38" width="2" height="2"/><rect x="108" y="43" width="2" height="2"/><rect x="101" y="120" width="2" height="3"/><rect x="19" y="102" width="4" height="3"/><rect x="549" y="120" width="2" height="3"/><rect x="913" y="123" width="2" height="3"/><rect x="129" y="84" width="4" height="3"/><rect x="116" y="21" width="2" height="2"/><rect x="904" y="25" width="4" height="3"/><rect x="784" y="28" width="2" height="3"/><rect x="729" y="102" width="4" height="2"/><rect x="415" y="161" width="3" height="3"/><rect x="421" y="143" width="4" height="3"/><rect x="885" y="97" width="3" height="3"/><rect x="890" y="9" width="4" height="2"/><rect x="1006" y="160" width="2" height="3"/><rect x="696" y="2" width="2" height="2"/><rect x="73" y="74" width="4" height="2"/><rect x="237" y="72" width="3" height="3"/><rect x="665" y="138" width="2" height="2"/><rect x="909" y="106" width="4" height="3"/><rect x="660" y="138" width="2" height="2"/><rect x="263" y="89" width="3" height="2"/><rect x="998" y="49" width="3" height="3"/><rect x="680" y="21" width="4" height="3"/><rect x="89" y="101" width="2" height="3"/><rect x="130" y="22" width="3" height="3"/><rect x="606" y="47" width="4" height="2"/><rect x="777" y="49" width="3" height="2"/><rect x="683" y="34" width="4" height="3"/><rect x="484" y="94" width="4" height="3"/><rect x="492" y="53" width="2" height="3"/><rect x="233" y="88" width="3" height="3"/><rect x="12" y="60" width="2" height="3"/><rect x="584" y="84" width="3" height="2"/><rect x="310" y="132" width="2" height="2"/><rect x="636" y="60" width="4" height="2"/><rect x="543" y="143" width="3" height="2"/><rect x="547" y="169" width="4" height="2"/><rect x="438" y="114" width="2" height="2"/><rect x="647" y="145" width="4" height="2"/><rect x="776" y="127" width="3" height="3"/><rect x="824" y="121" width="4" height="2"/><rect x="434" y="18" width="3" height="2"/><rect x="523" y="165" width="4" height="2"/><rect x="439" y="134" width="4" height="2"/><rect x="399" y="77" width="3" height="3"/><rect x="759" y="50" width="3" height="3"/><rect x="681" y="1" width="4" height="3"/><rect x="400" y="51" width="4" height="3"/><rect x="843" y="74" width="3" height="2"/><rect x="92" y="157" width="3" height="2"/><rect x="1007" y="35" width="3" height="2"/><rect x="27" y="44" width="3" height="3"/><rect x="966" y="132" width="4" height="3"/><rect x="543" y="88" width="4" height="3"/><rect x="409" y="61" width="4" height="3"/><rect x="476" y="2" width="2" height="2"/><rect x="104" y="64" width="3" height="2"/><rect x="924" y="165" width="3" height="3"/><rect x="462" y="107" width="4" height="3"/><rect x="726" y="128" width="2" height="2"/><rect x="381" y="63" width="2" height="3"/><rect x="538" y="19" width="3" height="3"/><rect x="862" y="169" width="3" height="2"/><rect x="550" y="140" width="2" height="2"/><rect x="433" y="10" width="4" height="2"/><rect x="371" y="170" width="4" height="2"/><rect x="726" y="2" width="2" height="3"/><rect x="746" y="95" width="3" height="3"/><rect x="884" y="100" width="4" height="2"/><rect x="206" y="85" width="4" height="3"/><rect x="915" y="153" width="4" height="2"/><rect x="603" y="70" width="2" height="2"/><rect x="165" y="130" width="2" height="2"/><rect x="105" y="29" width="4" height="3"/><rect x="864" y="105" width="2" height="2"/><rect x="719" y="99" width="2" height="2"/><rect x="372" y="29" width="3" height="2"/><rect x="902" y="162" width="2" height="3"/><rect x="201" y="107" width="2" height="2"/><rect x="231" y="68" width="2" height="3"/><rect x="57" y="41" width="2" height="2"/><rect x="167" y="100" width="2" height="3"/><rect x="6" y="148" width="3" height="3"/><rect x="439" y="43" width="3" height="2"/><rect x="255" y="67" width="4" height="2"/><rect x="434" y="68" width="4" height="3"/><rect x="24" y="148" width="2" height="2"/><rect x="178" y="65" width="2" height="3"/><rect x="416" y="62" width="3" height="3"/><rect x="353" y="111" width="2" height="3"/><rect x="867" y="60" width="2" height="3"/><rect x="201" y="48" width="2" height="3"/><rect x="37" y="114" width="3" height="2"/><rect x="254" y="22" width="2" height="3"/><rect x="572" y="135" width="4" height="3"/><rect x="490" y="136" width="2" height="2"/><rect x="386" y="37" width="3" height="3"/><rect x="661" y="99" width="3" height="3"/><rect x="530" y="39" width="3" height="2"/><rect x="989" y="171" width="4" height="3"/><rect x="617" y="63" width="2" height="3"/><rect x="639" y="36" width="2" height="2"/><rect x="570" y="46" width="3" height="2"/><rect x="690" y="97" width="3" height="2"/><rect x="409" y="15" width="2" height="2"/><rect x="337" y="113" width="2" height="2"/><rect x="590" y="62" width="4" height="3"/><rect x="202" y="123" width="2" height="2"/><rect x="303" y="140" width="3" height="3"/><rect x="374" y="144" width="3" height="2"/><rect x="984" y="30" width="3" height="3"/><rect x="942" y="4" width="4" height="3"/><rect x="261" y="145" width="3" height="2"/><rect x="191" y="20" width="4" height="2"/><rect x="748" y="7" width="2" height="2"/><rect x="452" y="129" width="2" height="3"/><rect x="775" y="94" width="4" height="2"/><rect x="593" y="39" width="3" height="3"/><rect x="972" y="115" width="4" height="3"/><rect x="982" y="19" width="4" height="3"/><rect x="946" y="150" width="4" height="2"/><rect x="1023" y="116" width="2" height="3"/><rect x="221" y="156" width="4" height="2"/><rect x="438" y="127" width="4" height="2"/><rect x="295" y="15" width="3" height="3"/><rect x="977" y="118" width="4" height="3"/><rect x="534" y="116" width="2" height="3"/><rect x="707" y="145" width="2" height="3"/><rect x="800" y="7" width="4" height="3"/><rect x="183" y="28" width="4" height="2"/><rect x="571" y="43" width="2" height="2"/><rect x="376" y="70" width="2" height="3"/><rect x="144" y="117" width="3" height="3"/><rect x="250" y="41" width="4" height="3"/><rect x="140" y="110" width="4" height="3"/><rect x="140" y="121" width="4" height="2"/><rect x="350" y="139" width="4" height="3"/><rect x="799" y="29" width="4" height="2"/><rect x="629" y="79" width="3" height="2"/><rect x="120" y="49" width="3" height="3"/><rect x="217" y="10" width="3" height="3"/><rect x="207" y="120" width="3" height="2"/><rect x="169" y="76" width="4" height="3"/><rect x="304" y="95" width="2" height="2"/><rect x="492" y="168" width="3" height="2"/><rect x="785" y="57" width="4" height="3"/><rect x="114" y="84" width="3" height="3"/><rect x="199" y="93" width="2" height="3"/><rect x="966" y="110" width="4" height="3"/><rect x="686" y="13" width="4" height="2"/><rect x="27" y="68" width="2" height="3"/><rect x="386" y="165" width="4" height="2"/><rect x="107" y="123" width="3" height="3"/><rect x="398" y="111" width="3" height="3"/><rect x="242" y="23" width="3" height="3"/><rect x="251" y="7" width="4" height="3"/><rect x="950" y="162" width="3" height="3"/><rect x="525" y="27" width="3" height="2"/><rect x="149" y="39" width="2" height="3"/><rect x="669" y="69" width="2" height="3"/><rect x="503" y="37" width="3" height="2"/><rect x="34" y="104" width="4" height="3"/><rect x="150" y="12" width="2" height="3"/><rect x="935" y="11" width="2" height="2"/><rect x="949" y="28" width="3" height="2"/><rect x="465" y="96" width="3" height="2"/><rect x="492" y="93" width="4" height="3"/><rect x="450" y="91" width="4" height="2"/><rect x="1023" y="164" width="4" height="2"/><rect x="852" y="10" width="4" height="3"/><rect x="640" y="51" width="4" height="3"/><rect x="1000" y="82" width="4" height="2"/><rect x="314" y="59" width="4" height="2"/><rect x="891" y="38" width="4" height="3"/><rect x="726" y="25" width="4" height="3"/><rect x="583" y="161" width="3" height="2"/><rect x="593" y="68" width="2" height="2"/><rect x="190" y="152" width="4" height="2"/><rect x="232" y="143" width="4" height="2"/><rect x="197" y="115" width="4" height="3"/><rect x="238" y="78" width="4" height="2"/><rect x="772" y="155" width="4" height="2"/><rect x="894" y="116" width="3" height="2"/><rect x="907" y="94" width="4" height="2"/><rect x="658" y="164" width="4" height="2"/><rect x="483" y="117" width="4" height="2"/><rect x="1016" y="33" width="3" height="2"/><rect x="144" y="133" width="2" height="3"/><rect x="249" y="64" width="2" height="2"/><rect x="483" y="21" width="2" height="3"/><rect x="954" y="15" width="2" height="2"/><rect x="963" y="149" width="2" height="3"/><rect x="783" y="58" width="4" height="2"/><rect x="867" y="21" width="3" height="3"/><rect x="758" y="7" width="4" height="3"/><rect x="105" y="94" width="4" height="2"/><rect x="36" y="156" width="2" height="3"/><rect x="372" y="119" width="2" height="3"/><rect x="119" y="4" width="2" height="2"/><rect x="841" y="32" width="4" height="3"/><rect x="917" y="114" width="2" height="3"/><rect x="565" y="118" width="3" height="3"/><rect x="14" y="59" width="2" height="3"/><rect x="527" y="149" width="2" height="2"/><rect x="191" y="140" width="4" height="3"/><rect x="885" y="165" width="4" height="3"/><rect x="413" y="149" width="4" height="2"/><rect x="379" y="90" width="3" height="2"/><rect x="619" y="7" width="2" height="3"/><rect x="764" y="57" width="3" height="3"/><rect x="984" y="54" width="3" height="3"/><rect x="350" y="4" width="3" height="2"/><rect x="662" y="124" width="2" height="3"/><rect x="404" y="11" width="3" height="3"/><rect x="597" y="90" width="2" height="2"/><rect x="961" y="154" width="2" height="2"/><rect x="813" y="108" width="4" height="2"/><rect x="381" y="48" width="2" height="2"/><rect x="715" y="52" width="3" height="3"/><rect x="534" y="109" width="3" height="3"/><rect x="351" y="120" width="4" height="3"/><rect x="928" y="134" width="4" height="3"/><rect x="939" y="138" width="3" height="2"/><rect x="142" y="1" width="4" height="3"/><rect x="425" y="68" width="3" height="2"/><rect x="616" y="25" width="4" height="3"/><rect x="265" y="98" width="4" height="3"/><rect x="77" y="33" width="2" height="2"/><rect x="319" y="60" width="3" height="3"/><rect x="1019" y="118" width="4" height="2"/><rect x="881" y="55" width="2" height="3"/><rect x="943" y="93" width="2" height="3"/><rect x="249" y="3" width="2" height="3"/><rect x="470" y="153" width="3" height="2"/><rect x="207" y="125" width="2" height="2"/><rect x="83" y="138" width="4" height="3"/><rect x="755" y="1" width="3" height="2"/><rect x="672" y="158" width="2" height="3"/><rect x="343" y="128" width="4" height="3"/><rect x="426" y="116" width="3" height="2"/><rect x="60" y="71" width="2" height="2"/><rect x="658" y="57" width="3" height="3"/><rect x="270" y="79" width="2" height="2"/><rect x="972" y="96" width="3" height="2"/><rect x="436" y="121" width="3" height="2"/><rect x="98" y="27" width="2" height="2"/><rect x="376" y="62" width="3" height="2"/><rect x="690" y="103" width="3" height="2"/><rect x="778" y="44" width="4" height="3"/><rect x="801" y="133" width="3" height="3"/><rect x="587" y="62" width="4" height="3"/><rect x="138" y="2" width="3" height="2"/><rect x="688" y="132" width="3" height="2"/><rect x="1039" y="39" width="2" height="2"/><rect x="656" y="21" width="4" height="2"/><rect x="583" y="31" width="4" height="3"/><rect x="774" y="154" width="4" height="2"/><rect x="555" y="60" width="4" height="2"/><rect x="464" y="147" width="2" height="3"/><rect x="946" y="67" width="2" height="3"/><rect x="829" y="5" width="4" height="2"/><rect x="69" y="110" width="3" height="3"/><rect x="63" y="96" width="3" height="3"/><rect x="992" y="107" width="2" height="2"/><rect x="265" y="45" width="3" height="2"/><rect x="243" y="35" width="3" height="3"/><rect x="313" y="170" width="2" height="2"/><rect x="501" y="160" width="3" height="2"/><rect x="864" y="48" width="3" height="2"/><rect x="510" y="152" width="2" height="3"/><rect x="717" y="102" width="3" height="2"/><rect x="608" y="151" width="2" height="3"/><rect x="48" y="132" width="3" height="2"/><rect x="457" y="24" width="3" height="2"/><rect x="845" y="26" width="2" height="2"/><rect x="957" y="26" width="4" height="3"/><rect x="102" y="29" width="4" height="3"/><rect x="95" y="58" width="4" height="3"/><rect x="926" y="168" width="2" height="2"/><rect x="211" y="107" width="2" height="2"/><rect x="142" y="102" width="4" height="3"/><rect x="733" y="125" width="2" height="3"/><rect x="68" y="19" width="3" height="2"/><rect x="552" y="0" width="2" height="2"/><rect x="665" y="93" width="2" height="3"/><rect x="882" y="164" width="2" height="3"/><rect x="1019" y="146" width="2" height="2"/><rect x="287" y="30" width="3" height="3"/><rect x="72" y="7" width="4" height="2"/><rect x="429" y="95" width="3" height="3"/><rect x="11" y="118" width="4" height="3"/><rect x="571" y="94" width="4" height="3"/><rect x="1031" y="149" width="4" height="3"/><rect x="419" y="54" width="3" height="3"/><rect x="1022" y="66" width="3" height="3"/><rect x="844" y="154" width="4" height="2"/><rect x="251" y="86" width="3" height="3"/><rect x="1041" y="141" width="4" height="2"/><rect x="91" y="106" width="2" height="2"/><rect x="426" y="96" width="4" height="3"/><rect x="576" y="54" width="4" height="2"/><rect x="497" y="111" width="3" height="3"/><rect x="622" y="170" width="2" height="3"/><rect x="373" y="11" width="4" height="3"/><rect x="643" y="116" width="3" height="2"/><rect x="660" y="93" width="2" height="3"/><rect x="275" y="144" width="4" height="3"/><rect x="548" y="82" width="2" height="2"/><rect x="69" y="129" width="3" height="2"/><rect x="554" y="139" width="2" height="2"/><rect x="160" y="113" width="2" height="2"/><rect x="338" y="62" width="3" height="2"/><rect x="431" y="120" width="3" height="2"/><rect x="383" y="113" width="4" height="3"/><rect x="475" y="15" width="3" height="3"/><rect x="1047" y="119" width="3" height="3"/><rect x="767" y="30" width="4" height="2"/><rect x="6" y="22" width="3" height="2"/><rect x="654" y="89" width="3" height="3"/><rect x="19" y="34" width="4" height="3"/><rect x="61" y="31" width="4" height="3"/><rect x="963" y="44" width="3" height="3"/><rect x="96" y="109" width="2" height="2"/><rect x="135" y="164" width="3" height="3"/><rect x="967" y="123" width="3" height="3"/><rect x="44" y="129" width="3" height="3"/><rect x="681" y="139" width="3" height="2"/><rect x="405" y="99" width="4" height="2"/><rect x="1027" y="146" width="4" height="3"/><rect x="67" y="35" width="2" height="2"/><rect x="794" y="65" width="4" height="3"/><rect x="521" y="154" width="2" height="2"/><rect x="622" y="79" width="3" height="3"/><rect x="436" y="81" width="2" height="3"/><rect x="417" y="23" width="2" height="2"/><rect x="777" y="69" width="2" height="3"/><rect x="582" y="132" width="3" height="2"/><rect x="95" y="145" width="4" height="2"/><rect x="107" y="15" width="2" height="3"/><rect x="58" y="116" width="4" height="3"/><rect x="507" y="9" width="4" height="3"/><rect x="886" y="24" width="3" height="2"/><rect x="916" y="25" width="3" height="2"/><rect x="544" y="1" width="4" height="3"/><rect x="546" y="15" width="3" height="3"/><rect x="697" y="51" width="3" height="3"/><rect x="715" y="52" width="2" height="3"/><rect x="842" y="146" width="3" height="3"/><rect x="212" y="9" width="4" height="3"/><rect x="979" y="112" width="4" height="2"/><rect x="384" y="137" width="2" height="3"/><rect x="965" y="95" width="2" height="3"/><rect x="9" y="12" width="4" height="3"/><rect x="37" y="38" width="3" height="3"/><rect x="211" y="36" width="4" height="3"/><rect x="426" y="124" width="2" height="2"/><rect x="61" y="74" width="4" height="2"/><rect x="51" y="148" width="2" height="3"/><rect x="189" y="158" width="4" height="2"/><rect x="523" y="115" width="4" height="3"/><rect x="842" y="91" width="2" height="2"/><rect x="816" y="122" width="4" height="2"/><rect x="489" y="34" width="2" height="2"/><rect x="435" y="113" width="3" height="3"/><rect x="720" y="26" width="2" height="2"/><rect x="44" y="143" width="3" height="2"/><rect x="918" y="136" width="4" height="2"/><rect x="325" y="44" width="4" height="2"/><rect x="159" y="137" width="2" height="3"/><rect x="1023" y="56" width="2" height="3"/><rect x="235" y="93" width="2" height="2"/><rect x="488" y="125" width="3" height="3"/><rect x="713" y="20" width="3" height="2"/><rect x="690" y="36" width="4" height="2"/><rect x="305" y="59" width="3" height="2"/><rect x="211" y="48" width="3" height="2"/><rect x="211" y="80" width="2" height="3"/><rect x="34" y="102" width="2" height="3"/><rect x="204" y="26" width="3" height="2"/><rect x="181" y="60" width="3" height="2"/><rect x="346" y="62" width="2" height="3"/><rect x="849" y="124" width="3" height="2"/><rect x="784" y="19" width="2" height="3"/><rect x="484" y="6" width="4" height="2"/><rect x="434" y="119" width="3" height="3"/><rect x="80" y="124" width="4" height="2"/><rect x="377" y="113" width="2" height="3"/><rect x="5" y="110" width="3" height="3"/><rect x="156" y="16" width="2" height="2"/><rect x="161" y="46" width="4" height="2"/><rect x="340" y="42" width="4" height="2"/><rect x="532" y="63" width="2" height="3"/><rect x="424" y="35" width="2" height="2"/><rect x="763" y="91" width="2" height="2"/><rect x="16" y="161" width="3" height="2"/><rect x="723" y="39" width="2" height="2"/><rect x="883" y="171" width="3" height="3"/><rect x="655" y="19" width="4" height="2"/><rect x="89" y="99" width="2" height="2"/><rect x="625" y="134" width="4" height="2"/><rect x="862" y="12" width="3" height="2"/><rect x="43" y="106" width="4" height="2"/><rect x="855" y="58" width="3" height="2"/><rect x="11" y="161" width="3" height="3"/><rect x="34" y="135" width="2" height="2"/><rect x="159" y="59" width="2" height="2"/><rect x="208" y="38" width="3" height="2"/><rect x="1047" y="135" width="3" height="2"/><rect x="522" y="133" width="2" height="2"/><rect x="209" y="107" width="3" height="3"/><rect x="97" y="123" width="3" height="2"/><rect x="844" y="84" width="4" height="3"/><rect x="142" y="142" width="3" height="2"/><rect x="782" y="142" width="4" height="2"/><rect x="457" y="141" width="4" height="3"/><rect x="785" y="102" width="4" height="2"/><rect x="71" y="134" width="3" height="2"/><rect x="252" y="100" width="4" height="2"/><rect x="921" y="98" width="4" height="2"/><rect x="412" y="134" width="4" height="3"/><rect x="867" y="69" width="2" height="2"/><rect x="685" y="143" width="3" height="3"/><rect x="833" y="1" width="3" height="2"/><rect x="999" y="150" width="3" height="3"/><rect x="431" y="51" width="2" height="3"/><rect x="573" y="14" width="3" height="3"/><rect x="650" y="50" width="2" height="3"/><rect x="197" y="152" width="3" height="2"/><rect x="127" y="117" width="2" height="3"/><rect x="864" y="31" width="3" height="3"/><rect x="1006" y="62" width="2" height="3"/><rect x="934" y="104" width="3" height="3"/><rect x="525" y="163" width="4" height="2"/><rect x="900" y="166" width="3" height="2"/><rect x="0" y="30" width="2" height="3"/><rect x="594" y="112" width="4" height="3"/><rect x="710" y="168" width="4" height="3"/><rect x="142" y="129" width="3" height="3"/><rect x="80" y="107" width="3" height="3"/><rect x="1006" y="62" width="4" height="3"/><rect x="985" y="138" width="2" height="3"/><rect x="518" y="118" width="2" height="2"/><rect x="919" y="152" width="2" height="3"/><rect x="470" y="128" width="2" height="3"/><rect x="37" y="56" width="2" height="2"/><rect x="1001" y="152" width="2" height="2"/><rect x="617" y="99" width="2" height="3"/><rect x="182" y="101" width="3" height="2"/><rect x="306" y="93" width="3" height="3"/><rect x="681" y="138" width="4" height="3"/><rect x="518" y="167" width="3" height="3"/><rect x="340" y="143" width="3" height="2"/><rect x="833" y="59" width="2" height="2"/><rect x="542" y="150" width="2" height="3"/><rect x="775" y="29" width="3" height="2"/><rect x="617" y="166" width="3" height="2"/><rect x="286" y="152" width="3" height="2"/><rect x="652" y="159" width="3" height="2"/><rect x="716" y="62" width="3" height="3"/><rect x="833" y="81" width="2" height="2"/><rect x="972" y="106" width="4" height="3"/><rect x="669" y="133" width="3" height="2"/><rect x="160" y="129" width="3" height="3"/><rect x="790" y="47" width="3" height="3"/><rect x="556" y="49" width="4" height="2"/><rect x="273" y="132" width="2" height="3"/><rect x="371" y="161" width="3" height="2"/><rect x="930" y="150" width="2" height="3"/><rect x="876" y="122" width="3" height="2"/><rect x="677" y="165" width="4" height="2"/><rect x="813" y="67" width="4" height="3"/><rect x="420" y="85" width="3" height="3"/><rect x="908" y="122" width="2" height="3"/><rect x="703" y="154" width="2" height="2"/><rect x="356" y="11" width="3" height="2"/><rect x="527" y="146" width="4" height="2"/><rect x="607" y="69" width="4" height="3"/><rect x="824" y="116" width="2" height="2"/><rect x="233" y="145" width="2" height="2"/><rect x="943" y="154" width="4" height="3"/><rect x="923" y="22" width="4" height="3"/><rect x="643" y="47" width="2" height="3"/><rect x="638" y="155" width="3" height="2"/><rect x="378" y="97" width="2" height="3"/><rect x="24" y="88" width="2" height="3"/><rect x="229" y="78" width="2" height="3"/><rect x="289" y="10" width="3" height="2"/><rect x="42" y="141" width="2" height="3"/><rect x="236" y="108" width="3" height="3"/><rect x="557" y="39" width="4" height="2"/><rect x="296" y="167" width="4" height="2"/><rect x="234" y="30" width="4" height="3"/><rect x="445" y="11" width="4" height="3"/><rect x="761" y="100" width="3" height="3"/><rect x="538" y="101" width="2" height="2"/><rect x="844" y="164" width="3" height="3"/><rect x="75" y="82" width="2" height="3"/><rect x="477" y="117" width="4" height="3"/><rect x="200" y="105" width="2" height="3"/><rect x="174" y="130" width="2" height="2"/><rect x="461" y="34" width="4" height="2"/><rect x="812" y="34" width="4" height="3"/><rect x="785" y="162" width="4" height="2"/><rect x="66" y="35" width="2" height="3"/><rect x="586" y="107" width="4" height="3"/><rect x="1041" y="52" width="2" height="2"/><rect x="726" y="72" width="2" height="3"/><rect x="811" y="59" width="2" height="3"/><rect x="816" y="81" width="2" height="3"/><rect x="834" y="81" width="2" height="2"/><rect x="555" y="43" width="3" height="2"/><rect x="372" y="112" width="2" height="3"/><rect x="993" y="168" width="3" height="3"/><rect x="169" y="153" width="3" height="2"/><rect x="145" y="19" width="4" height="3"/><rect x="29" y="139" width="2" height="3"/><rect x="819" y="35" width="4" height="2"/><rect x="901" y="58" width="4" height="3"/><rect x="509" y="109" width="2" height="2"/><rect x="256" y="155" width="3" height="2"/><rect x="103" y="150" width="2" height="3"/><rect x="479" y="100" width="4" height="3"/><rect x="800" y="97" width="4" height="2"/><rect x="905" y="29" width="4" height="2"/><rect x="753" y="80" width="3" height="2"/><rect x="124" y="85" width="3" height="2"/><rect x="735" y="137" width="2" height="2"/><rect x="412" y="135" width="2" height="2"/><rect x="255" y="155" width="2" height="2"/><rect x="40" y="8" width="2" height="2"/><rect x="814" y="8" width="4" height="3"/><rect x="276" y="26" width="2" height="3"/><rect x="795" y="18" width="4" height="2"/><rect x="196" y="138" width="2" height="3"/><rect x="111" y="135" width="3" height="2"/><rect x="76" y="5" width="4" height="2"/><rect x="528" y="106" width="4" height="2"/><rect x="741" y="113" width="4" height="3"/><rect x="480" y="115" width="4" height="2"/><rect x="25" y="142" width="3" height="2"/><rect x="128" y="111" width="2" height="3"/><rect x="1032" y="105" width="2" height="3"/><rect x="712" y="15" width="2" height="2"/><rect x="94" y="47" width="3" height="3"/><rect x="155" y="104" width="3" height="2"/><rect x="7" y="13" width="2" height="2"/><rect x="546" y="78" width="3" height="2"/><rect x="962" y="125" width="2" height="2"/><rect x="879" y="123" width="2" height="2"/><rect x="892" y="74" width="2" height="2"/><rect x="650" y="50" width="3" height="2"/><rect x="265" y="51" width="3" height="2"/><rect x="341" y="16" width="3" height="2"/><rect x="1030" y="112" width="3" height="3"/><rect x="288" y="43" width="3" height="2"/><rect x="358" y="93" width="3" height="3"/><rect x="2" y="132" width="2" height="3"/><rect x="834" y="91" width="2" height="2"/><rect x="867" y="54" width="4" height="3"/><rect x="385" y="92" width="3" height="2"/><rect x="222" y="9" width="4" height="2"/><rect x="985" y="70" width="4" height="2"/><rect x="680" y="37" width="2" height="3"/><rect x="453" y="20" width="2" height="3"/><rect x="645" y="28" width="4" height="3"/><rect x="791" y="42" width="3" height="2"/><rect x="96" y="148" width="4" height="3"/><rect x="649" y="112" width="4" height="2"/><rect x="689" y="102" width="4" height="3"/><rect x="319" y="11" width="2" height="2"/><rect x="77" y="13" width="4" height="2"/><rect x="759" y="111" width="4" height="3"/><rect x="967" y="77" width="2" height="3"/><rect x="318" y="70" width="4" height="2"/><rect x="467" y="125" width="2" height="3"/><rect x="359" y="142" width="2" height="3"/><rect x="870" y="39" width="2" height="3"/><rect x="704" y="47" width="2" height="2"/><rect x="76" y="15" width="4" height="3"/><rect x="694" y="31" width="2" height="3"/><rect x="102" y="168" width="3" height="3"/><rect x="685" y="97" width="2" height="2"/><rect x="68" y="3" width="2" height="3"/><rect x="382" y="124" width="2" height="3"/><rect x="827" y="43" width="3" height="2"/><rect x="549" y="19" width="2" height="2"/><rect x="300" y="65" width="2" height="2"/><rect x="681" y="152" width="3" height="3"/><rect x="253" y="153" width="3" height="2"/><rect x="53" y="113" width="3" height="2"/><rect x="296" y="81" width="3" height="2"/><rect x="115" y="95" width="3" height="2"/><rect x="425" y="83" width="2" height="2"/><rect x="447" y="10" width="2" height="2"/><rect x="279" y="76" width="2" height="3"/><rect x="583" y="12" width="2" height="3"/><rect x="781" y="96" width="3" height="2"/><rect x="63" y="74" width="2" height="2"/><rect x="548" y="87" width="3" height="2"/><rect x="107" y="82" width="3" height="3"/><rect x="824" y="23" width="3" height="3"/><rect x="103" y="48" width="3" height="2"/><rect x="126" y="168" width="3" height="3"/><rect x="189" y="2" width="4" height="2"/><rect x="676" y="117" width="2" height="2"/><rect x="811" y="114" width="2" height="3"/><rect x="152" y="137" width="3" height="2"/><rect x="900" y="63" width="4" height="2"/><rect x="735" y="3" width="3" height="2"/><rect x="472" y="145" width="3" height="3"/><rect x="1024" y="144" width="3" height="3"/><rect x="612" y="161" width="3" height="2"/><rect x="713" y="2" width="3" height="2"/><rect x="69" y="64" width="4" height="3"/><rect x="706" y="36" width="2" height="2"/><rect x="876" y="35" width="3" height="3"/><rect x="238" y="164" width="3" height="2"/><rect x="427" y="59" width="4" height="2"/><rect x="597" y="132" width="2" height="2"/><rect x="163" y="139" width="4" height="3"/><rect x="499" y="94" width="3" height="2"/><rect x="274" y="96" width="3" height="3"/><rect x="157" y="23" width="4" height="2"/><rect x="610" y="152" width="2" height="2"/><rect x="246" y="29" width="4" height="3"/><rect x="830" y="43" width="4" height="2"/><rect x="903" y="164" width="3" height="3"/><rect x="100" y="74" width="2" height="2"/><rect x="949" y="12" width="2" height="2"/><rect x="441" y="91" width="3" height="2"/><rect x="469" y="85" width="4" height="3"/><rect x="944" y="165" width="2" height="3"/><rect x="80" y="153" width="4" height="3"/><rect x="191" y="118" width="3" height="2"/><rect x="433" y="164" width="3" height="2"/><rect x="736" y="10" width="4" height="3"/><rect x="223" y="56" width="2" height="3"/><rect x="499" y="116" width="4" height="2"/><rect x="489" y="55" width="2" height="3"/><rect x="93" y="166" width="4" height="3"/><rect x="421" y="23" width="4" height="2"/><rect x="389" y="121" width="3" height="3"/><rect x="805" y="22" width="2" height="2"/><rect x="923" y="19" width="4" height="2"/><rect x="929" y="105" width="4" height="2"/><rect x="493" y="78" width="3" height="3"/><rect x="362" y="130" width="3" height="2"/><rect x="852" y="119" width="4" height="2"/><rect x="414" y="20" width="4" height="3"/><rect x="877" y="110" width="4" height="2"/><rect x="740" y="165" width="2" height="3"/><rect x="805" y="51" width="3" height="2"/><rect x="863" y="103" width="4" height="2"/><rect x="208" y="3" width="4" height="3"/><rect x="762" y="47" width="2" height="2"/><rect x="879" y="15" width="2" height="2"/><rect x="182" y="30" width="4" height="2"/><rect x="20" y="20" width="2" height="2"/><rect x="156" y="57" width="4" height="3"/><rect x="336" y="71" width="3" height="3"/><rect x="350" y="159" width="3" height="2"/><rect x="279" y="11" width="2" height="3"/><rect x="138" y="148" width="3" height="3"/><rect x="527" y="24" width="4" height="2"/><rect x="789" y="143" width="3" height="3"/><rect x="310" y="3" width="3" height="2"/><rect x="842" y="16" width="4" height="2"/><rect x="201" y="121" width="3" height="2"/><rect x="654" y="141" width="3" height="3"/><rect x="145" y="33" width="4" height="2"/><rect x="113" y="108" width="2" height="3"/><rect x="526" y="89" width="3" height="2"/><rect x="32" y="124" width="2" height="3"/><rect x="222" y="123" width="3" height="2"/><rect x="947" y="35" width="3" height="3"/><rect x="138" y="11" width="3" height="3"/><rect x="868" y="122" width="4" height="3"/><rect x="416" y="89" width="3" height="2"/><rect x="813" y="54" width="3" height="2"/><rect x="341" y="40" width="2" height="2"/><rect x="485" y="34" width="2" height="3"/><rect x="720" y="81" width="3" height="2"/><rect x="112" y="12" width="3" height="3"/><rect x="508" y="43" width="4" height="2"/><rect x="472" y="146" width="4" height="3"/><rect x="809" y="64" width="3" height="3"/><rect x="650" y="18" width="3" height="2"/><rect x="669" y="48" width="2" height="2"/><rect x="66" y="117" width="2" height="3"/><rect x="691" y="146" width="4" height="3"/><rect x="459" y="15" width="3" height="2"/><rect x="752" y="126" width="2" height="3"/><rect x="955" y="115" width="4" height="2"/><rect x="735" y="54" width="4" height="3"/><rect x="178" y="30" width="3" height="3"/><rect x="381" y="152" width="3" height="2"/><rect x="96" y="161" width="4" height="3"/><rect x="496" y="164" width="4" height="3"/><rect x="797" y="67" width="2" height="2"/><rect x="786" y="157" width="3" height="2"/><rect x="911" y="88" width="2" height="2"/><rect x="268" y="80" width="4" height="2"/><rect x="1025" y="105" width="3" height="2"/><rect x="766" y="145" width="4" height="2"/><rect x="693" y="10" width="2" height="2"/><rect x="604" y="2" width="3" height="2"/><rect x="944" y="163" width="3" height="2"/><rect x="891" y="140" width="3" height="3"/><rect x="317" y="106" width="3" height="3"/><rect x="298" y="161" width="2" height="3"/><rect x="794" y="132" width="4" height="2"/><rect x="858" y="110" width="2" height="2"/><rect x="793" y="139" width="3" height="3"/><rect x="400" y="144" width="2" height="2"/><rect x="566" y="58" width="2" height="3"/><rect x="941" y="30" width="3" height="2"/><rect x="900" y="163" width="4" height="2"/><rect x="833" y="144" width="3" height="3"/><rect x="494" y="79" width="4" height="2"/><rect x="766" y="62" width="2" height="2"/><rect x="124" y="152" width="2" height="2"/><rect x="389" y="105" width="3" height="2"/><rect x="208" y="79" width="3" height="3"/><rect x="843" y="163" width="3" height="3"/><rect x="334" y="59" width="3" height="3"/><rect x="602" y="18" width="4" height="2"/><rect x="508" y="71" width="4" height="2"/><rect x="218" y="62" width="3" height="2"/><rect x="688" y="97" width="3" height="3"/><rect x="25" y="22" width="2" height="2"/><rect x="550" y="140" width="4" height="3"/><rect x="107" y="136" width="4" height="2"/><rect x="230" y="151" width="4" height="3"/><rect x="166" y="109" width="2" height="3"/><rect x="212" y="52" width="3" height="2"/><rect x="516" y="129" width="2" height="2"/><rect x="635" y="65" width="4" height="2"/><rect x="193" y="156" width="4" height="2"/><rect x="912" y="62" width="2" height="2"/><rect x="530" y="154" width="4" height="2"/><rect x="536" y="159" width="4" height="2"/><rect x="151" y="108" width="2" height="3"/><rect x="143" y="118" width="4" height="3"/><rect x="245" y="37" width="4" height="3"/><rect x="57" y="132" width="3" height="2"/><rect x="786" y="41" width="3" height="2"/><rect x="543" y="30" width="4" height="2"/><rect x="949" y="35" width="4" height="2"/><rect x="787" y="122" width="4" height="2"/><rect x="286" y="143" width="4" height="2"/><rect x="513" y="0" width="2" height="2"/><rect x="943" y="96" width="3" height="2"/><rect x="336" y="29" width="2" height="3"/><rect x="429" y="123" width="2" height="2"/><rect x="169" y="70" width="4" height="3"/><rect x="318" y="28" width="2" height="3"/><rect x="89" y="33" width="3" height="2"/><rect x="530" y="31" width="3" height="3"/><rect x="807" y="101" width="3" height="3"/><rect x="495" y="34" width="4" height="2"/><rect x="525" y="40" width="3" height="3"/><rect x="1015" y="69" width="3" height="3"/><rect x="352" y="121" width="3" height="2"/><rect x="489" y="143" width="4" height="2"/><rect x="44" y="134" width="3" height="3"/><rect x="534" y="122" width="4" height="3"/><rect x="1000" y="106" width="2" height="2"/><rect x="997" y="25" width="3" height="3"/><rect x="831" y="101" width="4" height="2"/><rect x="357" y="162" width="4" height="3"/><rect x="683" y="49" width="2" height="2"/><rect x="647" y="138" width="3" height="3"/><rect x="288" y="89" width="2" height="3"/><rect x="576" y="135" width="3" height="3"/><rect x="122" y="44" width="4" height="3"/><rect x="18" y="137" width="2" height="3"/><rect x="851" y="107" width="2" height="3"/><rect x="936" y="49" width="3" height="2"/><rect x="986" y="65" width="2" height="2"/><rect x="220" y="126" width="2" height="2"/><rect x="327" y="37" width="3" height="3"/><rect x="128" y="166" width="2" height="2"/><rect x="578" y="158" width="2" height="2"/><rect x="456" y="33" width="4" height="3"/><rect x="902" y="66" width="2" height="2"/><rect x="627" y="167" width="2" height="2"/><rect x="59" y="21" width="2" height="3"/><rect x="744" y="108" width="2" height="3"/><rect x="170" y="31" width="4" height="3"/><rect x="706" y="166" width="3" height="2"/><rect x="1028" y="74" width="3" height="3"/><rect x="266" y="40" width="2" height="2"/><rect x="174" y="153" width="3" height="2"/><rect x="468" y="106" width="2" height="3"/><rect x="575" y="151" width="2" height="3"/><rect x="461" y="4" width="4" height="3"/><rect x="693" y="87" width="2" height="2"/><rect x="961" y="96" width="2" height="3"/><rect x="184" y="66" width="4" height="2"/><rect x="525" y="158" width="4" height="2"/><rect x="887" y="62" width="4" height="2"/><rect x="598" y="125" width="3" height="3"/><rect x="1008" y="163" width="4" height="2"/><rect x="332" y="64" width="3" height="2"/><rect x="832" y="135" width="2" height="3"/><rect x="334" y="130" width="3" height="3"/><rect x="166" y="147" width="3" height="3"/><rect x="901" y="169" width="3" height="2"/><rect x="157" y="130" width="4" height="3"/><rect x="953" y="100" width="3" height="2"/><rect x="92" y="133" width="2" height="3"/><rect x="290" y="19" width="3" height="3"/><rect x="927" y="138" width="2" height="3"/><rect x="681" y="17" width="3" height="3"/><rect x="225" y="112" width="3" height="3"/><rect x="216" y="87" width="4" height="3"/><rect x="807" y="118" width="4" height="3"/><rect x="479" y="148" width="3" height="3"/><rect x="1006" y="8" width="2" height="3"/><rect x="56" y="169" width="4" height="2"/><rect x="369" y="146" width="2" height="3"/><rect x="856" y="6" width="3" height="2"/><rect x="91" y="146" width="2" height="2"/><rect x="488" y="80" width="4" height="2"/><rect x="766" y="59" width="4" height="2"/><rect x="1005" y="110" width="2" height="2"/><rect x="880" y="45" width="2" height="2"/><rect x="952" y="38" width="2" height="3"/><rect x="273" y="10" width="2" height="3"/><rect x="1020" y="132" width="4" height="3"/><rect x="560" y="146" width="3" height="2"/><rect x="103" y="156" width="3" height="2"/><rect x="782" y="40" width="3" height="3"/><rect x="864" y="165" width="3" height="2"/><rect x="547" y="20" width="3" height="3"/><rect x="934" y="156" width="3" height="3"/><rect x="518" y="46" width="3" height="2"/><rect x="582" y="130" width="4" height="3"/><rect x="170" y="152" width="3" height="3"/><rect x="1008" y="168" width="2" height="3"/><rect x="611" y="165" width="3" height="2"/><rect x="330" y="5" width="2" height="3"/><rect x="130" y="49" width="4" height="3"/><rect x="591" y="162" width="4" height="3"/><rect x="505" y="159" width="2" height="2"/><rect x="378" y="103" width="3" height="3"/><rect x="1018" y="42" width="4" height="2"/><rect x="442" y="36" width="2" height="2"/><rect x="541" y="113" width="2" height="2"/><rect x="718" y="158" width="2" height="2"/><rect x="280" y="167" width="2" height="3"/><rect x="329" y="97" width="2" height="3"/><rect x="368" y="121" width="4" height="2"/><rect x="14" y="35" width="2" height="2"/><rect x="107" y="159" width="3" height="3"/><rect x="709" y="66" width="4" height="2"/><rect x="71" y="142" width="3" height="2"/><rect x="871" y="153" width="4" height="2"/><rect x="449" y="149" width="2" height="2"/><rect x="1044" y="170" width="4" height="3"/><rect x="169" y="124" width="4" height="2"/><rect x="377" y="154" width="3" height="2"/><rect x="171" y="26" width="2" height="2"/><rect x="168" y="86" width="4" height="2"/><rect x="588" y="71" width="4" height="2"/><rect x="764" y="40" width="2" height="2"/><rect x="972" y="1" width="3" height="2"/><rect x="812" y="143" width="4" height="3"/><rect x="451" y="81" width="2" height="2"/><rect x="1024" y="170" width="2" height="3"/><rect x="1037" y="41" width="2" height="2"/><rect x="208" y="44" width="3" height="2"/><rect x="356" y="13" width="3" height="2"/><rect x="538" y="160" width="2" height="2"/><rect x="181" y="74" width="2" height="3"/><rect x="975" y="100" width="3" height="2"/><rect x="1039" y="126" width="4" height="2"/><rect x="860" y="135" width="3" height="2"/><rect x="352" y="18" width="4" height="2"/><rect x="536" y="29" width="4" height="2"/><rect x="455" y="113" width="2" height="2"/><rect x="948" y="1" width="2" height="3"/><rect x="106" y="70" width="4" height="3"/><rect x="1044" y="57" width="3" height="3"/><rect x="234" y="69" width="4" height="3"/><rect x="73" y="15" width="2" height="2"/><rect x="1040" y="157" width="2" height="3"/><rect x="527" y="84" width="2" height="2"/><rect x="703" y="85" width="3" height="3"/><rect x="67" y="101" width="3" height="2"/><rect x="148" y="83" width="2" height="2"/><rect x="732" y="99" width="4" height="2"/><rect x="829" y="135" width="2" height="2"/><rect x="842" y="41" width="2" height="3"/><rect x="365" y="119" width="3" height="3"/><rect x="748" y="47" width="3" height="3"/><rect x="189" y="23" width="4" height="3"/><rect x="908" y="109" width="2" height="3"/><rect x="753" y="20" width="3" height="2"/><rect x="705" y="1" width="2" height="3"/><rect x="88" y="52" width="4" height="3"/><rect x="889" y="128" width="4" height="3"/><rect x="1018" y="110" width="4" height="2"/><rect x="327" y="35" width="4" height="3"/><rect x="133" y="61" width="4" height="2"/><rect x="651" y="113" width="2" height="2"/><rect x="440" y="114" width="2" height="2"/><rect x="558" y="47" width="4" height="3"/><rect x="820" y="88" width="2" height="3"/><rect x="571" y="50" width="4" height="2"/><rect x="859" y="83" width="4" height="2"/><rect x="766" y="147" width="4" height="3"/><rect x="478" y="15" width="3" height="2"/><rect x="867" y="168" width="3" height="3"/><rect x="667" y="119" width="3" height="2"/><rect x="359" y="70" width="3" height="3"/><rect x="845" y="39" width="3" height="3"/><rect x="114" y="136" width="4" height="2"/><rect x="512" y="63" width="3" height="3"/><rect x="45" y="22" width="3" height="3"/><rect x="911" y="75" width="3" height="2"/><rect x="330" y="167" width="2" height="2"/><rect x="370" y="10" width="4" height="2"/><rect x="348" y="146" width="2" height="3"/><rect x="445" y="26" width="3" height="2"/><rect x="117" y="46" width="4" height="3"/><rect x="1045" y="169" width="2" height="3"/><rect x="410" y="65" width="2" height="3"/><rect x="120" y="55" width="2" height="2"/><rect x="656" y="32" width="2" height="2"/><rect x="308" y="34" width="2" height="2"/><rect x="495" y="132" width="3" height="2"/><rect x="38" y="56" width="4" height="2"/><rect x="536" y="21" width="2" height="3"/><rect x="327" y="71" width="3" height="2"/><rect x="947" y="20" width="3" height="2"/><rect x="687" y="72" width="3" height="2"/><rect x="396" y="6" width="4" height="3"/><rect x="283" y="133" width="3" height="3"/><rect x="1036" y="9" width="3" height="3"/><rect x="239" y="107" width="4" height="3"/><rect x="576" y="66" width="2" height="3"/><rect x="797" y="128" width="2" height="3"/><rect x="485" y="36" width="2" height="2"/><rect x="98" y="16" width="3" height="2"/><rect x="454" y="87" width="3" height="3"/><rect x="542" y="168" width="2" height="2"/><rect x="536" y="84" width="3" height="3"/><rect x="904" y="36" width="3" height="3"/><rect x="890" y="103" width="4" height="3"/><rect x="298" y="14" width="4" height="3"/><rect x="886" y="63" width="4" height="3"/><rect x="144" y="115" width="2" height="3"/><rect x="169" y="4" width="3" height="2"/><rect x="422" y="28" width="4" height="2"/><rect x="698" y="76" width="3" height="3"/><rect x="244" y="135" width="3" height="2"/><rect x="874" y="64" width="4" height="2"/><rect x="30" y="38" width="3" height="3"/><rect x="709" y="85" width="3" height="2"/><rect x="569" y="12" width="2" height="2"/><rect x="272" y="110" width="2" height="2"/><rect x="692" y="149" width="3" height="2"/><rect x="752" y="125" width="2" height="2"/><rect x="287" y="51" width="2" height="2"/><rect x="705" y="127" width="3" height="2"/><rect x="791" y="62" width="3" height="2"/><rect x="863" y="112" width="2" height="2"/><rect x="642" y="6" width="4" height="2"/><rect x="281" y="145" width="2" height="2"/><rect x="17" y="152" width="3" height="2"/><rect x="872" y="118" width="4" height="2"/><rect x="906" y="35" width="4" height="3"/><rect x="633" y="23" width="3" height="2"/><rect x="955" y="4" width="4" height="2"/><rect x="53" y="120" width="4" height="3"/><rect x="316" y="126" width="2" height="2"/><rect x="1039" y="75" width="3" height="2"/><rect x="851" y="125" width="2" height="3"/><rect x="96" y="158" width="4" height="3"/><rect x="643" y="147" width="2" height="3"/><rect x="734" y="79" width="3" height="2"/><rect x="986" y="38" width="3" height="2"/><rect x="140" y="52" width="2" height="2"/><rect x="100" y="75" width="3" height="3"/><rect x="535" y="86" width="2" height="3"/><rect x="421" y="27" width="3" height="3"/><rect x="164" y="131" width="3" height="2"/><rect x="495" y="87" width="2" height="2"/><rect x="371" y="139" width="2" height="3"/><rect x="290" y="109" width="3" height="3"/><rect x="396" y="99" width="2" height="3"/><rect x="459" y="0" width="3" height="3"/><rect x="833" y="24" width="4" height="2"/><rect x="736" y="29" width="4" height="2"/><rect x="826" y="116" width="3" height="3"/><rect x="876" y="122" width="3" height="2"/><rect x="890" y="27" width="2" height="2"/><rect x="334" y="110" width="3" height="3"/><rect x="291" y="17" width="4" height="2"/><rect x="169" y="100" width="2" height="3"/><rect x="678" y="83" width="2" height="2"/><rect x="1029" y="149" width="3" height="2"/><rect x="934" y="110" width="2" height="3"/><rect x="229" y="134" width="3" height="2"/><rect x="986" y="29" width="3" height="3"/><rect x="110" y="138" width="4" height="2"/><rect x="726" y="26" width="4" height="2"/><rect x="63" y="98" width="2" height="2"/><rect x="261" y="14" width="3" height="2"/><rect x="276" y="31" width="2" height="3"/><rect x="964" y="38" width="2" height="3"/><rect x="120" y="38" width="2" height="2"/><rect x="346" y="18" width="4" height="3"/><rect x="819" y="170" width="2" height="3"/><rect x="39" y="129" width="3" height="3"/><rect x="235" y="71" width="4" height="3"/><rect x="711" y="100" width="4" height="3"/><rect x="288" y="142" width="3" height="2"/><rect x="694" y="96" width="3" height="2"/><rect x="1045" y="87" width="2" height="2"/><rect x="719" y="154" width="3" height="2"/><rect x="14" y="107" width="4" height="2"/><rect x="885" y="80" width="2" height="3"/><rect x="456" y="109" width="2" height="2"/><rect x="675" y="112" width="4" height="3"/><rect x="23" y="76" width="3" height="2"/><rect x="354" y="22" width="4" height="2"/><rect x="301" y="135" width="3" height="2"/><rect x="121" y="125" width="2" height="3"/><rect x="26" y="124" width="3" height="2"/><rect x="647" y="109" width="4" height="3"/><rect x="940" y="20" width="3" height="3"/><rect x="511" y="76" width="2" height="3"/><rect x="972" y="65" width="2" height="3"/><rect x="504" y="122" width="3" height="3"/><rect x="545" y="95" width="2" height="2"/><rect x="684" y="45" width="2" height="2"/><rect x="463" y="130" width="3" height="3"/><rect x="160" y="89" width="3" height="2"/></g>
<g fill="#d8cfc4" opacity=".6"><rect x="1153.8" y="153.5" width="2" height="2" /><rect x="1083.8" y="95.9" width="2" height="2" /><rect x="1101.6" y="5.8" width="2" height="2" /><rect x="1104.4" y="156.6" width="2" height="2" /><rect x="1090.3" y="100.2" width="2" height="2" /><rect x="1131.0" y="10.8" width="2" height="2" /><rect x="1152.4" y="18.7" width="2" height="2" /><rect x="1090.2" y="122.4" width="2" height="2" /><rect x="1061.9" y="64.2" width="2" height="2" /><rect x="1072.7" y="80.9" width="2" height="2" /><rect x="1061.6" y="25.8" width="2" height="2" /><rect x="1082.2" y="13.9" width="2" height="2" /><rect x="1069.1" y="33.3" width="2" height="2" /><rect x="1111.8" y="23.4" width="2" height="2" /><rect x="1142.1" y="71.3" width="2" height="2" /><rect x="1085.2" y="41.2" width="2" height="2" /><rect x="1144.0" y="8.0" width="2" height="2" /><rect x="1134.2" y="16.7" width="2" height="2" /><rect x="1154.5" y="69.8" width="2" height="2" /><rect x="1119.8" y="147.6" width="2" height="2" /><rect x="1070.0" y="10.9" width="2" height="2" /><rect x="1129.4" y="100.5" width="2" height="2" /><rect x="1132.1" y="47.5" width="2" height="2" /><rect x="1109.7" y="31.9" width="2" height="2" /><rect x="1103.7" y="48.2" width="2" height="2" /><rect x="1118.6" y="51.1" width="2" height="2" /><rect x="1087.5" y="109.9" width="2" height="2" /><rect x="1068.6" y="137.0" width="2" height="2" /><rect x="1109.6" y="39.1" width="2" height="2" /><rect x="1071.5" y="87.0" width="2" height="2" /><rect x="1110.4" y="123.0" width="2" height="2" /><rect x="1097.4" y="70.5" width="2" height="2" /><rect x="1149.3" y="46.8" width="2" height="2" /><rect x="1158.1" y="152.6" width="2" height="2" /><rect x="1159.0" y="161.3" width="2" height="2" /><rect x="1085.7" y="139.3" width="2" height="2" /><rect x="1121.2" y="34.9" width="2" height="2" /><rect x="1159.8" y="110.8" width="2" height="2" /><rect x="1141.0" y="95.4" width="2" height="2" /><rect x="1068.0" y="147.6" width="2" height="2" /><rect x="1077.5" y="44.3" width="2" height="2" /><rect x="1121.6" y="33.2" width="2" height="2" /><rect x="1106.3" y="122.0" width="2" height="2" /><rect x="1069.6" y="113.0" width="2" height="2" /><rect x="1070.4" y="81.3" width="2" height="2" /><rect x="1124.9" y="117.5" width="2" height="2" /><rect x="1064.3" y="32.7" width="2" height="2" /><rect x="1156.0" y="66.9" width="2" height="2" /><rect x="1102.5" y="64.1" width="2" height="2" /><rect x="1129.6" y="126.6" width="2" height="2" /><rect x="1125.0" y="68.8" width="2" height="2" /><rect x="1117.0" y="88.1" width="2" height="2" /><rect x="1078.8" y="162.4" width="2" height="2" /><rect x="1156.5" y="132.9" width="2" height="2" /><rect x="1159.3" y="79.6" width="2" height="2" /><rect x="1143.9" y="41.2" width="2" height="2" /><rect x="1134.3" y="122.3" width="2" height="2" /><rect x="1153.9" y="142.5" width="2" height="2" /><rect x="1147.9" y="45.8" width="2" height="2" /><rect x="1138.7" y="81.3" width="2" height="2" /></g>
<path d="M1060 35L1162 10M1075 75L1162 55M1080 120L1162 95M1110 0L1150 171M1068 150L1162 130M1100 60L1160 30" stroke="#e9e6e0" stroke-width="2.5" fill="none"/>
<path d="M0.0 7.8 L137.5 20.3 L187.5 26.5 L250.0 27.5 L312.5 14.0 L350.0 3.0" stroke="#cfcfcf" stroke-width="3.4" fill="none" stroke-linejoin="round"/>
<path d="M162.0 19.0 L206.0 131.0 L215.0 171.0" stroke="#cfcfcf" stroke-width="3.4" fill="none" stroke-linejoin="round"/>
<path d="M273.0 0.0 L275.0 171.0" stroke="#cfcfcf" stroke-width="3.4" fill="none" stroke-linejoin="round"/>
<path d="M691.0 9.4 L683.0 100.0 L680.0 171.0" stroke="#cfcfcf" stroke-width="3.4" fill="none" stroke-linejoin="round"/>
<path d="M763.0 0.0 L755.0 47.0 L752.0 94.0 L730.0 125.0 L720.6 171.0" stroke="#cfcfcf" stroke-width="3.4" fill="none" stroke-linejoin="round"/>
<path d="M380.0 147.0 L458.0 119.0" stroke="#cfcfcf" stroke-width="3.4" fill="none" stroke-linejoin="round"/>
<path d="M436.0 161.0 L658.0 161.0" stroke="#cfcfcf" stroke-width="3.4" fill="none" stroke-linejoin="round"/>
<path d="M658.0 0.0 L658.0 171.0" stroke="#cfcfcf" stroke-width="3.4" fill="none" stroke-linejoin="round"/>
<path d="M849.5 25.0 L896.0 37.5 L949.5 48.4 L987.0 50.0 L1024.5 67.0 L1031.0 90.6 L1043.0 125.0 L1052.6 153.0" stroke="#cfcfcf" stroke-width="3.4" fill="none" stroke-linejoin="round"/>
<path d="M952.6 0.0 L977.6 48.4" stroke="#cfcfcf" stroke-width="3.4" fill="none" stroke-linejoin="round"/>
<path d="M809.0 145.0 L924.5 151.6 L1052.6 154.7 L1162.0 156.0" stroke="#cfcfcf" stroke-width="3.4" fill="none" stroke-linejoin="round"/>
<path d="M500.0 10.0 L515.0 45.0 L545.0 58.0" stroke="#cfcfcf" stroke-width="3.4" fill="none" stroke-linejoin="round"/>
<path d="M511.0 119.0 L536.0 171.0" stroke="#cfcfcf" stroke-width="3.4" fill="none" stroke-linejoin="round"/>
<path d="M300.0 130.0 L380.0 120.0" stroke="#cfcfcf" stroke-width="3.4" fill="none" stroke-linejoin="round"/>
<path d="M1052.0 153.0 L1100.0 171.0" stroke="#cfcfcf" stroke-width="3.4" fill="none" stroke-linejoin="round"/>
<path d="M0.0 7.8 L137.5 20.3 L187.5 26.5 L250.0 27.5 L312.5 14.0 L350.0 3.0" stroke="#fdfdfd" stroke-width="2.2" fill="none" stroke-linejoin="round"/>
<path d="M162.0 19.0 L206.0 131.0 L215.0 171.0" stroke="#fdfdfd" stroke-width="2.2" fill="none" stroke-linejoin="round"/>
<path d="M273.0 0.0 L275.0 171.0" stroke="#fdfdfd" stroke-width="2.2" fill="none" stroke-linejoin="round"/>
<path d="M691.0 9.4 L683.0 100.0 L680.0 171.0" stroke="#fdfdfd" stroke-width="2.2" fill="none" stroke-linejoin="round"/>
<path d="M763.0 0.0 L755.0 47.0 L752.0 94.0 L730.0 125.0 L720.6 171.0" stroke="#fdfdfd" stroke-width="2.2" fill="none" stroke-linejoin="round"/>
<path d="M380.0 147.0 L458.0 119.0" stroke="#fdfdfd" stroke-width="2.2" fill="none" stroke-linejoin="round"/>
<path d="M436.0 161.0 L658.0 161.0" stroke="#fdfdfd" stroke-width="2.2" fill="none" stroke-linejoin="round"/>
<path d="M658.0 0.0 L658.0 171.0" stroke="#fdfdfd" stroke-width="2.2" fill="none" stroke-linejoin="round"/>
<path d="M849.5 25.0 L896.0 37.5 L949.5 48.4 L987.0 50.0 L1024.5 67.0 L1031.0 90.6 L1043.0 125.0 L1052.6 153.0" stroke="#fdfdfd" stroke-width="2.2" fill="none" stroke-linejoin="round"/>
<path d="M952.6 0.0 L977.6 48.4" stroke="#fdfdfd" stroke-width="2.2" fill="none" stroke-linejoin="round"/>
<path d="M809.0 145.0 L924.5 151.6 L1052.6 154.7 L1162.0 156.0" stroke="#fdfdfd" stroke-width="2.2" fill="none" stroke-linejoin="round"/>
<path d="M500.0 10.0 L515.0 45.0 L545.0 58.0" stroke="#fdfdfd" stroke-width="2.2" fill="none" stroke-linejoin="round"/>
<path d="M511.0 119.0 L536.0 171.0" stroke="#fdfdfd" stroke-width="2.2" fill="none" stroke-linejoin="round"/>
<path d="M300.0 130.0 L380.0 120.0" stroke="#fdfdfd" stroke-width="2.2" fill="none" stroke-linejoin="round"/>
<path d="M1052.0 153.0 L1100.0 171.0" stroke="#fdfdfd" stroke-width="2.2" fill="none" stroke-linejoin="round"/>
<path d="M150.0 0.0 L159.0 109.0 L162.0 171.0" stroke="#a9a9a9" stroke-width="1" fill="none"/>
<path d="M137.5 0.0 L139.0 22.0 L159.0 94.0" stroke="#9cc8dc" stroke-width="2.6" fill="none"/>
<path d="M409.7 90.0 L430.0 84.0 L453.0 86.0 L453.0 100.0 L430.0 104.7 L409.7 104.0Z" fill="#a8dca8"/>
<path d="M423.8 79.7 L436.0 79.7 L436.0 89.0 L423.8 89.0Z" fill="#8fd0a0"/>
<path d="M242.0 64.0 L256.0 61.0 L256.0 70.0 L244.0 72.0Z" fill="#b6e0b0"/>
<path d="M325.0 121.0 L340.0 120.0 L353.0 126.0 L340.0 131.0 L327.0 130.0Z" fill="#a6cfa0"/>
<path d="M899.5 23.4 L910.0 24.0 L910.0 37.5 L899.5 37.0Z" fill="#a6cfa0"/>
<path d="M929.0 36.0 L945.0 31.0 L957.0 40.0 L957.0 48.4 L929.0 48.0Z" fill="#a6cfa0"/>
<path d="M310.0 165.0 L330.0 160.0 L340.0 171.0 L305.0 171.0Z" fill="#a6cfa0"/>
<path d="M115.6 30.0 L125.0 22.0 L137.5 26.0 L132.0 47.0 L118.0 47.0Z" fill="#f6f4c6" stroke="#e8e0a0" stroke-width=".8"/>
<path d="M533.0 59.0 L550.0 60.0 L550.0 94.0 L535.0 92.0Z" fill="#f6f4c6" stroke="#e8e0a0" stroke-width=".8"/>
<path d="M545.6 14.0 L558.0 14.0 L558.0 31.0 L545.6 31.0Z" fill="#f6f4c6" stroke="#e8e0a0" stroke-width=".8"/>
<path d="M580.0 65.6 L596.0 66.0 L596.0 78.0 L582.0 78.0Z" fill="#f6f4c6" stroke="#e8e0a0" stroke-width=".8"/>
<path d="M705.0 1.6 L717.5 1.6 L717.5 31.0 L705.0 31.0Z" fill="#f6f4c6" stroke="#e8e0a0" stroke-width=".8"/>
<path d="M717.5 145.0 L728.0 146.0 L728.0 170.0 L718.0 170.0Z" fill="#f6f4c6" stroke="#e8e0a0" stroke-width=".8"/>
<path d="M667.5 33.0 L684.7 31.0 L684.7 44.0 L668.0 42.0Z" fill="#f6f4c6" stroke="#e8e0a0" stroke-width=".8"/>
<path d="M624.0 30.0 L642.5 30.0 L642.5 39.0 L624.0 39.0Z" fill="#f6f4c6" stroke="#e8e0a0" stroke-width=".8"/>
<path d="M963.6 9.4 L975.0 12.0 L990.0 30.0 L985.0 37.5 L975.0 30.0 L965.0 20.0Z" fill="#f6f4c6" stroke="#e8e0a0" stroke-width=".8"/>
<path d="M1032.0 83.0 L1048.0 83.0 L1048.0 100.0 L1032.0 100.0Z" fill="#f6f4c6" stroke="#e8e0a0" stroke-width=".8"/>
<path d="M255.0 75.0 L275.0 70.0 L275.0 83.0 L258.0 84.0Z" fill="#f6f4c6" stroke="#e8e0a0" stroke-width=".8"/>
<path d="M305.0 70.0 L318.0 68.0 L318.0 80.0 L306.0 80.0Z" fill="#f6f4c6" stroke="#e8e0a0" stroke-width=".8"/>
<path d="M398.0 89.0 L412.0 88.0 L412.0 100.0 L400.0 101.0Z" fill="#f6f4c6" stroke="#e8e0a0" stroke-width=".8"/>
<path d="M775.0 110.0 L790.0 110.0 L790.0 120.0 L776.0 120.0Z" fill="#f6f4c6" stroke="#e8e0a0" stroke-width=".8"/>
<path d="M796.0 25.0 L815.0 24.0 L815.0 33.0 L797.0 34.0Z" fill="#f6f4c6" stroke="#e8e0a0" stroke-width=".8"/>
<path d="M770.0 35.0 L780.0 35.0 L780.0 46.0 L770.0 46.0Z" fill="#f6f4c6" stroke="#e8e0a0" stroke-width=".8"/>
<path d="M250.0 110.0 L262.0 110.0 L262.0 118.0 L250.0 118.0Z" fill="#f6f4c6" stroke="#e8e0a0" stroke-width=".8"/>
<rect x="548" y="20" width="4" height="8" fill="#7cc8a8"/>
<rect x="540" y="75" width="5" height="3" fill="#7cc8a8"/>
<rect x="770" y="61" width="4.5" height="5" fill="#7cc8a8"/>
<rect x="712" y="5" width="3" height="10" fill="#7cc8a8"/>
<rect x="720" y="152" width="3" height="4" fill="#7cc8a8"/>
<rect x="986" y="25" width="4" height="7" fill="#7cc8a8"/>
<rect x="1041" y="86" width="3" height="9" fill="#7cc8a8"/>
<rect x="404" y="108" width="6" height="6" fill="#7cc8a8"/>
<path d="M344.0 16.0 L366.0 12.5 L376.0 43.0 L352.0 47.0Z" fill="#d5c9bd"/>
<path d="M585.0 30.0 L615.0 32.0 L612.0 40.0 L583.0 38.0Z" fill="#d8ccc0"/>
<rect x="974.5" y="153" width="28" height="18" fill="#e8d2e6"/>
<path d="M460.0 20.0 L470.0 18.0 L472.0 30.0 L462.0 32.0Z" fill="#ead6e4"/>
<path d="M240.6 72.0 L261.0 58.0 L275.0 70.0 L253.0 83.0 L239.0 90.6 L240.6 72.0" stroke="#a888b8" stroke-width="1.5" fill="none" opacity=".75"/>
<path d="M190.6 134.0 L204.7 171.0" stroke="#a888b8" stroke-width="1.5" fill="none" opacity=".75"/>
<path d="M798.0 26.6 L884.0 21.0 L885.4 32.8 L930.8 50.0 L924.5 150.0 L965.0 171.0" stroke="#a888b8" stroke-width="1.5" fill="none" opacity=".75"/>
<path d="M0.0 100.6 L78.0 101.5 L125.0 115.6 L194.0 137.5" stroke="#d8d890" stroke-width="4.2" fill="none" stroke-linejoin="round"/>
<path d="M420.6 0.0 L430.0 22.0 L458.0 90.6 L459.7 112.5 L455.0 171.0" stroke="#d8d890" stroke-width="4.2" fill="none" stroke-linejoin="round"/>
<path d="M458.0 113.0 L623.8 115.0 L661.0 118.0 L780.0 142.0 L806.0 145.0" stroke="#d8d890" stroke-width="4.2" fill="none" stroke-linejoin="round"/>
<path d="M845.0 0.0 L845.0 19.0" stroke="#d8d890" stroke-width="4.2" fill="none" stroke-linejoin="round"/>
<path d="M827.6 28.0 L827.6 49.0" stroke="#d8d890" stroke-width="4.2" fill="none" stroke-linejoin="round"/>
<path d="M0.0 100.6 L78.0 101.5 L125.0 115.6 L194.0 137.5" stroke="#eef0a8" stroke-width="3" fill="none" stroke-linejoin="round"/>
<path d="M420.6 0.0 L430.0 22.0 L458.0 90.6 L459.7 112.5 L455.0 171.0" stroke="#eef0a8" stroke-width="3" fill="none" stroke-linejoin="round"/>
<path d="M458.0 113.0 L623.8 115.0 L661.0 118.0 L780.0 142.0 L806.0 145.0" stroke="#eef0a8" stroke-width="3" fill="none" stroke-linejoin="round"/>
<path d="M845.0 0.0 L845.0 19.0" stroke="#eef0a8" stroke-width="3" fill="none" stroke-linejoin="round"/>
<path d="M827.6 28.0 L827.6 49.0" stroke="#eef0a8" stroke-width="3" fill="none" stroke-linejoin="round"/>
<path d="M251.5 0.0 L233.0 94.0 L194.0 134.0 L134.0 171.0" stroke="#dcb182" stroke-width="5" fill="none" stroke-linejoin="round"/>
<path d="M233.0 94.0 L281.0 83.0 L344.0 61.0 L400.0 31.0 L427.0 18.8 L470.6 1.6 L511.0 1.6 L567.5 12.5 L652.0 25.0 L780.0 50.0 L793.0 51.6 L829.0 49.4" stroke="#dcb182" stroke-width="5" fill="none" stroke-linejoin="round"/>
<path d="M829.0 49.4 L830.8 62.5 L827.6 87.5 L818.0 112.5 L809.0 140.6 L806.0 171.0" stroke="#dcb182" stroke-width="5" fill="none" stroke-linejoin="round"/>
<path d="M486.0 0.0 L486.0 171.0" stroke="#dcb182" stroke-width="5" fill="none" stroke-linejoin="round"/>
<path d="M251.5 0.0 L233.0 94.0 L194.0 134.0 L134.0 171.0" stroke="#f0c28e" stroke-width="3.8" fill="none" stroke-linejoin="round"/>
<path d="M233.0 94.0 L281.0 83.0 L344.0 61.0 L400.0 31.0 L427.0 18.8 L470.6 1.6 L511.0 1.6 L567.5 12.5 L652.0 25.0 L780.0 50.0 L793.0 51.6 L829.0 49.4" stroke="#f0c28e" stroke-width="3.8" fill="none" stroke-linejoin="round"/>
<path d="M829.0 49.4 L830.8 62.5 L827.6 87.5 L818.0 112.5 L809.0 140.6 L806.0 171.0" stroke="#f0c28e" stroke-width="3.8" fill="none" stroke-linejoin="round"/>
<path d="M486.0 0.0 L486.0 171.0" stroke="#f0c28e" stroke-width="3.8" fill="none" stroke-linejoin="round"/>
</svg></div>
<svg style="left:0;top:0" width="1162" height="171" viewBox="0 0 1162 171">
<defs><filter id="bl" x="-50%" y="-50%" width="200%" height="200%"><feGaussianBlur stdDeviation="2"/></filter></defs>
<rect x="430" y="47" width="28" height="12" rx="2" fill="#f5f3d0" stroke="#d6d09a" stroke-width=".8"/><text x="444.0" y="56.4" font-size="8.2" font-family="Liberation Sans" fill="#555" text-anchor="middle">D087a</text>
<rect x="623.75" y="110" width="36.25" height="12.5" rx="2" fill="#f5f3d0" stroke="#d6d09a" stroke-width=".8"/><text x="641.875" y="119.9" font-size="8.2" font-family="Liberation Sans" fill="#555" text-anchor="middle">40V030a</text>
<rect x="821" y="19" width="29" height="11" rx="2" fill="#f5f3d0" stroke="#d6d09a" stroke-width=".8"/><text x="835.5" y="27.4" font-size="8.2" font-family="Liberation Sans" fill="#555" text-anchor="middle">D087a</text>
<rect x="334" y="155" width="36" height="12" rx="2" fill="#f5f3d0" stroke="#d6d09a" stroke-width=".8"/><text x="352.0" y="164.4" font-size="8.2" font-family="Liberation Sans" fill="#555" text-anchor="middle">40V030a</text>
<text x="173" y="57" font-size="10.5" font-family="Liberation Sans" fill="#9a9a9a" letter-spacing="0.3">Chariqchi</text>
<text x="968" y="81" font-size="10" font-family="Liberation Sans" fill="#959595" letter-spacing="0.6">Teraktagi</text>
<text x="448" y="99.5" font-size="11.5" font-family="Liberation Sans" fill="#5a5a5a" letter-spacing="0">Marg‘ilon</text>
<text x="185" y="30" font-size="6" font-family="Liberation Sans" fill="#777" letter-spacing="0" transform="rotate(4 185 30)">Orol bo‘yi ko‘chasi</text>
<text x="315" y="18" font-size="6" font-family="Liberation Sans" fill="#777" letter-spacing="0" transform="rotate(-14 315 18)">Orol bo‘yi ko‘chasi</text>
<text x="290" y="82" font-size="6" font-family="Liberation Sans" fill="#6a6a6a" letter-spacing="0" transform="rotate(-20 290 82)">Burxoniddin Marg‘iloniy ko‘chasi</text>
<text x="650" y="26" font-size="6" font-family="Liberation Sans" fill="#6a6a6a" letter-spacing="0" transform="rotate(9 650 26)">Burxoniddin Marg‘iloniy ko‘chasi</text>
<text x="664" y="119" font-size="6" font-family="Liberation Sans" fill="#6a6a6a" letter-spacing="0" transform="rotate(11 664 119)">Ahmad Yassaviy ko‘chasi</text>
<text x="377" y="150" font-size="6" font-family="Liberation Sans" fill="#777" letter-spacing="0" transform="rotate(-20 377 150)">Eshonguzar ko‘chasi</text>
<text x="808" y="144" font-size="6" font-family="Liberation Sans" fill="#777" letter-spacing="0" transform="rotate(2 808 144)">Imom Moturudiy ko‘chasi</text>
<text x="952" y="150" font-size="6" font-family="Liberation Sans" fill="#777" letter-spacing="0" transform="rotate(2 952 150)">Ig‘lar ko‘chasi</text>
<text x="895" y="38" font-size="6" font-family="Liberation Sans" fill="#777" letter-spacing="0" transform="rotate(14 895 38)">Karimov ko‘chasi</text>
<text x="235" y="40" font-size="6" font-family="Liberation Sans" fill="#6a6a6a" letter-spacing="0" transform="rotate(-80 235 40)">Ahmad Al-Farg‘oniy</text>
<text x="478" y="25" font-size="6" font-family="Liberation Sans" fill="#6a6a6a" letter-spacing="0" transform="rotate(90 478 25)">Mustaqillik ko‘chasi</text>
<text x="1030" y="95" font-size="6" font-family="Liberation Sans" fill="#777" letter-spacing="0" transform="rotate(70 1030 95)">Ig‘lar ko‘chasi</text>
<text x="813" y="118" font-size="6" font-family="Liberation Sans" fill="#6a6a6a" letter-spacing="0" transform="rotate(-75 813 118)">Usmon Nosir ko‘chasi</text>
<text x="686" y="60" font-size="6" font-family="Liberation Sans" fill="#777" letter-spacing="0" transform="rotate(-88 686 60)">Yusufiy ko‘chasi</text>
<text x="752" y="115" font-size="6" font-family="Liberation Sans" fill="#777" letter-spacing="0" transform="rotate(-70 752 115)">Sohibi Jon ko‘chasi</text>
<ellipse cx="492" cy="92" rx="9" ry="6" fill="#555" opacity=".35" filter="url(#bl)"/>
</svg>
 <!-- marker -->
 <svg style="left:474px;top:68px" width="20" height="30" viewBox="0 0 20 30"><path d="M10 .8A9 9 0 0 0 1 9.8c0 2 .6 3.6 1.6 5.2L10 29.2l7.4-14.2c1-1.6 1.6-3.2 1.6-5.2A9 9 0 0 0 10 .8z" fill="#2f84cc" stroke="#2272b4" stroke-width=".8"/><circle cx="10" cy="9.8" r="3.2" fill="#fff"/></svg>
 <!-- zoom control -->
 <div class="a" style="left:8px;top:8px;width:25px;height:47px;background:#fff;border:1px solid rgba(0,0,0,.28);border-radius:3px"></div>
 <div class="a" style="left:9px;top:31px;width:23px;height:1px;background:#ccc"></div>
 <svg style="left:15px;top:14px" width="11" height="11" viewBox="0 0 11 11"><path d="M5.5 0v11M0 5.5h11" stroke="#111" stroke-width="2"/></svg>
 <svg style="left:15.5px;top:42px" width="10" height="2" viewBox="0 0 10 2"><path d="M0 1h10" stroke="#111" stroke-width="2"/></svg>
 <!-- layers control -->
 <div class="a" style="left:8.5px;top:63px;width:34px;height:33.5px;background:#fff;border-radius:5px;box-shadow:0 0 2px rgba(0,0,0,.35)"></div>
 <svg style="left:15px;top:70px" width="21" height="20" viewBox="0 0 21 20"><path d="M10.5 10.5L1 14.5l9.5 4.5 9.5-4.5z" fill="#9a9a9a"/><path d="M10.5 6.5L1 10.5l9.5 4.5 9.5-4.5z" fill="#b5b5b5" stroke="#fff" stroke-width=".5"/><path d="M10.5 2.5L1 6.5l9.5 4.5 9.5-4.5z" fill="#cfcfcf" stroke="#fff" stroke-width=".5"/></svg>
 <!-- attribution -->
 <div class="a" style="left:1036px;top:158px;width:126px;height:13px;background:rgba(255,255,255,.82);border-top-left-radius:3px"></div>
 <div class="a" style="left:1041px;top:162px;width:9px;height:3px;background:#3b7ddd"></div>
 <div class="a" style="left:1041px;top:165px;width:9px;height:3px;background:#f5d024"></div>
 <div class="tx" style="left:1051.5px;top:160px;font-size:9px;color:#333;letter-spacing:-.15px"><span style="color:#1c85c4">Leaflet</span> | © OpenStreetMap</div>
 </div>

 <!-- lat/lng -->
 <div class="tx lbl" style="left:51px;top:413.3px">Kenglik (lat)</div>
 <div class="tx lbl" style="left:638px;top:413.3px">Uzunlik (lng)</div>
 <div class="ig" style="left:51px;top:432px;width:574px"><div class="ad"></div></div>
 <div class="ig" style="left:638px;top:432px;width:575px"><div class="ad"></div></div>
 <svg style="left:60px;top:439.5px" width="12" height="12" viewBox="0 0 12 12"><circle cx="6" cy="6" r="5.3" fill="none" stroke="#1a1a1a" stroke-width="1.4"/><ellipse cx="6" cy="6" rx="2.2" ry="5.3" fill="none" stroke="#1a1a1a" stroke-width="1.3"/><path d="M.8 4.2h10.4M.8 7.8h10.4M6 .7v10.6" stroke="#1a1a1a" stroke-width="1.2"/></svg>
 <svg style="left:648px;top:439.5px" width="12" height="12" viewBox="0 0 12 12"><circle cx="6" cy="6" r="5.3" fill="none" stroke="#1a1a1a" stroke-width="1.4"/><ellipse cx="6" cy="6" rx="2.2" ry="5.3" fill="none" stroke="#1a1a1a" stroke-width="1.3"/><path d="M.8 4.2h10.4M.8 7.8h10.4M6 .7v10.6" stroke="#1a1a1a" stroke-width="1.2"/></svg>
 <div class="tx val" style="left:92px;top:442.6px">40.469065</div>
 <div class="tx val" style="left:680px;top:442.6px">71.720774</div>
 <div class="a" style="left:51px;top:474px;width:109px;height:23px;border:1px solid #4a8ff8;border-radius:3px"></div>
 <svg style="left:57px;top:480px" width="10" height="10" viewBox="0 0 9 9"><path d="M8.8.2L5.4 8.8 4.2 4.8.2 3.6z" fill="#0d6efd" stroke="#0d6efd" stroke-width=".5" stroke-linejoin="round"/></svg>
 <div class="tx" style="left:70px;top:480.3px;font-size:10px;color:#0d6efd">Xaritada ko‘rsatish</div>
 <div class="a" style="left:51px;top:503px;width:1162px;height:1px;background:#cfcfcf"></div>

 <div class="tx lbl" style="left:51px;top:514.4px">Hisob raqami (R/C)</div>
 <div class="tx lbl" style="left:638px;top:514.4px">Bank</div>
 <div class="ig" style="left:51px;top:534px;width:574px"><div class="ad"></div></div>
 <div class="ig" style="left:638px;top:534px;width:575px"><div class="ad"></div></div>
 <svg style="left:60px;top:541px" width="12.5" height="12" viewBox="0 0 12.5 12"><path d="M6.25 0L.3 2.6v1.5h11.9V2.6z" fill="#1a1a1a"/><rect x="1.5" y="4.6" width="1.5" height="5" fill="#1a1a1a"/><rect x="4.1" y="4.6" width="1.5" height="5" fill="#1a1a1a"/><rect x="6.9" y="4.6" width="1.5" height="5" fill="#1a1a1a"/><rect x="9.5" y="4.6" width="1.5" height="5" fill="#1a1a1a"/><rect x=".6" y="10" width="11.3" height="2" fill="#1a1a1a"/><circle cx="6.25" cy="2.4" r=".7" fill="#fff"/></svg>
 <svg style="left:648px;top:541px" width="12.5" height="12" viewBox="0 0 12.5 12"><path d="M6.25 0L.3 2.6v1.5h11.9V2.6z" fill="#1a1a1a"/><rect x="1.5" y="4.6" width="1.5" height="5" fill="#1a1a1a"/><rect x="4.1" y="4.6" width="1.5" height="5" fill="#1a1a1a"/><rect x="6.9" y="4.6" width="1.5" height="5" fill="#1a1a1a"/><rect x="9.5" y="4.6" width="1.5" height="5" fill="#1a1a1a"/><rect x=".6" y="10" width="11.3" height="2" fill="#1a1a1a"/><circle cx="6.25" cy="2.4" r=".7" fill="#fff"/></svg>
 <div class="tx lbl" style="left:51px;top:579.1px">MFO</div>
 <div class="tx lbl" style="left:638px;top:579.1px">OKED</div>
 <div class="ig" style="left:51px;top:599.5px;width:574px"><div class="ad"></div></div>
 <div class="ig" style="left:638px;top:599.5px;width:575px"><div class="ad"></div></div>
</div>
<!-- scrollbar -->
<div class="a" style="left:1239px;top:136px;width:15px;height:470px;background:#f1f1f1"></div>
<div class="a" style="left:1240px;top:152px;width:12px;height:319px;background:#c1c1c1"></div>
<svg style="left:1243px;top:142px" width="8" height="4" viewBox="0 0 8 4"><path d="M0 4L4 0 8 4z" fill="#a3a3a3"/></svg>
<svg style="left:1243px;top:595px" width="8" height="4" viewBox="0 0 8 4"><path d="M0 0L4 4 8 0z" fill="#505050"/></svg>
<!-- footer -->
<div class="a" style="left:26px;top:606px;width:1228px;height:1px;background:#dee2e6"></div>
<div class="a" style="left:1107.5px;top:619px;width:54.5px;height:28.5px;background:#6c757d;border-radius:4px"></div>
<div class="tx" style="left:1117.3px;top:628.3px;font-size:11.5px;color:#fff;-webkit-text-stroke:.3px #fff">Yopish</div>
<div class="a" style="left:1167.5px;top:619px;width:74px;height:28.5px;background:#0d6efd;border-radius:4px"></div>
<svg style="left:1177px;top:628.5px" width="11" height="11" viewBox="0 0 11 11"><path d="M0 1.4A1.4 1.4 0 0 1 1.4 0h7L11 2.6v7A1.4 1.4 0 0 1 9.6 11H1.4A1.4 1.4 0 0 1 0 9.6z" fill="#fff"/><rect x="1.8" y="1.6" width="6" height="2.6" fill="#0d6efd"/><circle cx="5.5" cy="7.3" r="1.6" fill="#0d6efd"/></svg>
<div class="tx" style="left:1191.5px;top:628.3px;font-size:11.5px;letter-spacing:-.3px;color:#fff;-webkit-text-stroke:.3px #fff">Saqlash</div>

<!-- ============ TASKBAR ============ -->
<div id="taskbar" class="a"></div>
<div class="a" style="left:0;top:681px;width:1280px;height:2px;background:#4a4b4d"></div>
<div class="a" style="left:0;top:683px;width:1280px;height:36px;overflow:hidden"><div class="a" style="left:0;top:-683px;width:1280px;height:719px">
<div class="a" style="left:746px;top:685px;width:88px;height:36px;background:radial-gradient(ellipse 22px 9px at 50% 50%,rgba(150,100,90,.55),transparent)"></div>
<div class="a" style="left:734px;top:703px;width:56px;height:24px;background:radial-gradient(ellipse 14px 6px at 50% 50%,rgba(170,120,150,.5),transparent)"></div>
<div class="a" style="left:691px;top:683px;width:48px;height:32px;background:radial-gradient(ellipse 12px 8px at 50% 50%,rgba(90,90,80,.45),transparent)"></div>
<div class="a" style="left:810px;top:680px;width:80px;height:32px;background:radial-gradient(ellipse 20px 8px at 50% 50%,rgba(90,100,100,.35),transparent)"></div>
<div class="a" style="left:894px;top:698px;width:72px;height:28px;background:radial-gradient(ellipse 18px 7px at 50% 50%,rgba(110,90,120,.35),transparent)"></div>
<div class="a" style="left:962px;top:677px;width:56px;height:40px;background:radial-gradient(ellipse 14px 10px at 50% 50%,rgba(80,100,95,.35),transparent)"></div>
<div class="a" style="left:662px;top:696px;width:56px;height:32px;background:radial-gradient(ellipse 14px 8px at 50% 50%,rgba(70,70,60,.4),transparent)"></div>
<div class="a" style="left:990px;top:681px;width:100px;height:48px;background:radial-gradient(ellipse 25px 12px at 50% 50%,rgba(60,80,75,.3),transparent)"></div>
<div class="a" style="left:1140px;top:680px;width:80px;height:40px;background:radial-gradient(ellipse 20px 10px at 50% 50%,rgba(80,60,60,.3),transparent)"></div>
<div class="a" style="left:1209px;top:696px;width:72px;height:32px;background:radial-gradient(ellipse 18px 8px at 50% 50%,rgba(100,70,70,.3),transparent)"></div>
<div class="a" style="left:628px;top:675px;width:64px;height:40px;background:radial-gradient(ellipse 16px 10px at 50% 50%,rgba(60,70,65,.4),transparent)"></div>
<div class="a" style="left:918px;top:678px;width:64px;height:24px;background:radial-gradient(ellipse 16px 6px at 50% 50%,rgba(90,110,100,.3),transparent)"></div>
</div></div>
<!-- start orb -->
<svg style="left:8px;top:684px" width="35" height="34" viewBox="0 0 35 34">
 <defs><radialGradient id="orb" cx=".5" cy=".8" r=".75"><stop offset="0" stop-color="#48e0ff"/><stop offset=".4" stop-color="#1e82c0"/><stop offset=".85" stop-color="#0e4670"/><stop offset="1" stop-color="#2a4a60"/></radialGradient>
 <linearGradient id="gl" x1="0" y1="0" x2="0" y2="1"><stop offset="0" stop-color="#fff" stop-opacity=".6"/><stop offset="1" stop-color="#fff" stop-opacity=".05"/></linearGradient></defs>
 <circle cx="17.5" cy="17" r="16.8" fill="url(#orb)" stroke="#556" stroke-width=".6"/>
 <path d="M8.5 8c3-1.3 6-1 9.5.6l-1.6 6.6C13 13.6 10 13.3 7 14.6z" fill="#f0522a"/>
 <path d="M18.8 8.9c3.4 1.6 6.4 1.9 9.6.5l-1.6 6.8c-3.2 1.4-6.2 1.1-9.6-.5z" fill="#86c440"/>
 <path d="M6.6 15.6c3-1.3 6-1 9.5.6l-1.6 6.8c-3.5-1.6-6.5-1.9-9.5-.6z" fill="#2aa0e4"/>
 <path d="M16.9 16.7c3.4 1.6 6.4 1.9 9.6.5l-1.6 6.8c-3.2 1.4-6.2 1.1-9.6-.5z" fill="#fbb81a"/>
 <ellipse cx="17.5" cy="9.5" rx="13" ry="8" fill="url(#gl)"/>
</svg>
<!-- floppy -->
<svg style="left:68px;top:685px" width="30" height="30" viewBox="0 0 30 30">
 <path d="M1 2a1.5 1.5 0 0 1 1.5-1.5H27l2.5 2.5v25.5A1.5 1.5 0 0 1 28 30H2.5A1.5 1.5 0 0 1 1 28.5z" fill="#2451c8"/>
 <rect x="8.5" y=".8" width="13" height="9" fill="#d8dce4"/><rect x="15.5" y="1.8" width="3.5" height="6.5" fill="#2451c8"/>
 <rect x="4" y="13" width="22" height="15.5" fill="#fff"/>
 <path d="M5 16.5h20M5 20.5h20M5 24.5h20" stroke="#e03040" stroke-width="1.2"/>
</svg>
<!-- 1C -->
<svg style="left:127px;top:686px" width="28" height="28" viewBox="0 0 28 28">
 <defs><radialGradient id="oc" cx=".45" cy=".3" r=".75"><stop offset="0" stop-color="#fffbd8"/><stop offset=".55" stop-color="#f6d860"/><stop offset="1" stop-color="#d0a020"/></radialGradient></defs>
 <circle cx="14" cy="14" r="13.7" fill="url(#oc)"/>
 <path d="M3 10.5l3.6-2.8h2.2v10.2H6.2V11z" fill="#e81e14"/>
 <path d="M21.5 11.2A5.6 5.6 0 1 0 15.2 18.8h11.6v-2.3H15.2a3.3 3.3 0 1 1 3.8-5.3z" fill="#e81e14"/>
</svg>
<!-- calc -->
<svg style="left:188px;top:686px" width="22" height="28" viewBox="0 0 22 28">
 <rect x=".5" y=".5" width="21" height="27" rx="1.5" fill="#9ccbef" stroke="#5aa0d8"/>
 <rect x="2.5" y="2" width="17" height="2" fill="#f5a040"/>
 <rect x="2.5" y="4" width="17" height="7" fill="#e8f2fb"/>
 <g fill="#5f8fb8"><rect x="3" y="13" width="3" height="2"/><rect x="7.5" y="13" width="3" height="2"/><rect x="12" y="13" width="3" height="2"/><rect x="16" y="13" width="3" height="2"/>
 <rect x="3" y="17" width="3" height="2"/><rect x="7.5" y="17" width="3" height="2"/><rect x="12" y="17" width="3" height="2"/>
 <rect x="3" y="21" width="3" height="2"/><rect x="7.5" y="21" width="3" height="2"/><rect x="12" y="21" width="3" height="2"/></g>
 <rect x="16" y="17" width="3" height="7" fill="#f08a20"/>
</svg>
<!-- folder -->
<svg style="left:242px;top:688px" width="31" height="28" viewBox="0 0 31 28">
 <path d="M1 3h9l2 2h17v21H1z" fill="#e8c66a"/>
 <rect x="4" y="1" width="6" height="4" fill="#fff"/><rect x="4.5" y="1.5" width="2.5" height="2" fill="#30b030"/>
 <rect x="12" y="2.5" width="6" height="4" fill="#fff"/><rect x="12.5" y="3" width="2.5" height="2" fill="#e03030"/>
 <rect x="19" y="4.5" width="7" height="4" fill="#fff"/><rect x="19.5" y="5" width="2.5" height="2" fill="#2a90e0"/>
 <path d="M1 8h29v18H1z" fill="#f6dc90"/>
 <path d="M5 15h20v12h-5v-6h-10v6H5z" fill="#6cc0ec"/>
</svg>
<!-- word -->
<svg style="left:302px;top:685.5px" width="28" height="29" viewBox="0 0 28 29">
 <rect x="13" y="4" width="14.5" height="21" fill="#fff"/>
 <path d="M15 7h11M15 10h11M15 13h11M15 16h11M15 19h11M15 22h11" stroke="#2b5797" stroke-width="1"/>
 <path d="M0 3.5L16 0v29L0 25.5z" fill="#2b579a"/>
 <path d="M3 9.5h2l1.3 6.3L7.8 9.5h1.6l1.5 6.3 1.3-6.3h2L12 19h-1.8l-1.5-6-1.5 6H5.4z" fill="#fff"/>
</svg>
<!-- excel box -->
<div class="a" style="left:347px;top:682.5px;width:54px;height:35px;border:1px solid #8a8a8a;border-radius:2px;background:linear-gradient(135deg,#7a7a7a 0%,#4a4a4a 35%,#2a2a2a 60%,#3a3a3a 100%)"></div>
<svg style="left:360px;top:686px" width="28" height="28" viewBox="0 0 28 28">
 <rect x="12" y="4" width="15" height="20" fill="#fff"/>
 <path d="M14 7.5h12M14 11h12M14 14.5h12M14 18h12M14 21.5h12M19 5v18" stroke="#217346" stroke-width="1.1"/>
 <path d="M0 3.5L16 .5v27L0 24.5z" fill="#1f7244"/>
 <path d="M3.5 9h2.8l2 3.6 2-3.6h2.7l-3.2 5.3 3.4 5.5h-2.8l-2.1-3.8-2.1 3.8H3.4l3.4-5.5z" fill="#fff"/>
</svg>
<!-- chrome box -->
<div class="a" style="left:405px;top:682.5px;width:54px;height:35px;border:1px solid #b0b0b0;border-radius:2px;background:linear-gradient(135deg,#a8a8a8 0%,#8a8a8a 40%,#6a6a6a 60%,#9a9a9a 100%)"></div>
<svg style="left:417px;top:685px" width="30" height="30" viewBox="0 0 30 30">
 <circle cx="15" cy="15" r="14.5" fill="#2fa84f"/>
 <path d="M15 .5A14.5 14.5 0 0 1 27.6 7.8H15A7.2 7.2 0 0 0 8.7 11.4L2.4 7.8A14.5 14.5 0 0 1 15 .5z" fill="#ea4335"/>
 <path d="M27.6 7.8A14.5 14.5 0 0 1 15 29.5l6.3-10.9A7.2 7.2 0 0 0 21.3 11.4z" fill="#fbbc04"/>
 <circle cx="15" cy="15" r="7.2" fill="#fff"/><circle cx="15" cy="15" r="5.6" fill="#4285f4"/>
 <circle cx="23" cy="23" r="7" fill="#3a6fe0"/>
 <path d="M26 19l-2.5 4.5-4-1.5 3 3-1.5 2.5 2.5-1.5 2 1z" fill="#f06050"/>
</svg>
<!-- telegram -->
<svg style="left:475px;top:686px" width="28" height="28" viewBox="0 0 28 28">
 <circle cx="14" cy="14" r="13.5" fill="#2ca5e0"/>
 <path d="M6 13.5l15-6-2.6 12.6-4-3-2 2 .3-3.6 6-5.5-7.5 4.6z" fill="#fff"/>
</svg>
<!-- cloud box -->
<div class="a" style="left:521px;top:682.5px;width:54px;height:35px;border:1px solid #9a9a9a;border-radius:2px;background:linear-gradient(135deg,#8a8a8a 0%,#5a5a5a 35%,#3a3838 60%,#4a4646 100%)"></div>
<svg style="left:537px;top:691px" width="23" height="19" viewBox="0 0 23 19">
 <path d="M5 14.5a4 4 0 0 1-.5-8A6.5 6.5 0 0 1 17 5.5a4.5 4.5 0 0 1 1.5 9" fill="none" stroke="#2a70e8" stroke-width="1.8"/>
 <text x="11.5" y="18.5" font-size="5" font-family="Liberation Sans" font-weight="bold" fill="#2a70e8" text-anchor="middle">ATC</text>
</svg>
<!-- telegram active box -->
<div class="a" style="left:579px;top:682.5px;width:54px;height:35px;border:1px solid #f5e080;border-radius:2px;background:linear-gradient(180deg,#f0d048 0%,#e8b030 50%,#dc8a1c 100%)"></div>
<svg style="left:592px;top:686px" width="30" height="30" viewBox="0 0 30 30">
 <circle cx="14" cy="14" r="13.5" fill="#2ca5e0"/>
 <path d="M6 13.5l15-6-2.6 12.6-4-3-2 2 .3-3.6 6-5.5-7.5 4.6z" fill="#fff"/>
 <circle cx="21.8" cy="22" r="7.5" fill="#e53935"/>
 <text x="21.8" y="26" font-size="10" font-family="Liberation Sans" font-weight="bold" fill="#fff" text-anchor="middle">1</text>
</svg>
<!-- tray -->
<div class="tx" style="left:1009.5px;top:692.5px;font-size:11.5px;color:#e6e6e6">EN</div>
<svg style="left:1039px;top:694px" width="15" height="14" viewBox="0 0 15 14"><circle cx="7" cy="7.5" r="6.5" fill="#3aa040"/><circle cx="8.5" cy="6.5" r="5.5" fill="#e62e2e"/><path d="M8.5 3v4.2" stroke="#fff" stroke-width="1.6"/><circle cx="8.5" cy="9.3" r=".9" fill="#fff"/></svg>
<svg style="left:1061px;top:693px" width="15" height="15" viewBox="0 0 15 15"><path d="M1.5 1v13" stroke="#ddd" stroke-width="1.3"/><path d="M2 1.5h6l1 1.5h4v5H8l-1-1.5H2z" fill="#e8e8e8"/><circle cx="10.8" cy="11" r="3.6" fill="#d22"/><path d="M9.3 9.5l3 3M12.3 9.5l-3 3" stroke="#fff" stroke-width="1.1"/></svg>
<svg style="left:1084px;top:693px" width="12" height="15" viewBox="0 0 12 15"><rect x="1" y="2" width="8" height="12" fill="none" stroke="#ddd" stroke-width="1.3"/><rect x="2.5" y="4" width="5" height="8" fill="#bbb"/><path d="M8 6h3M8 9h3M4 0v3M6 0v3" stroke="#eee" stroke-width="1.2"/></svg>
<svg style="left:1106px;top:695px" width="15" height="12" viewBox="0 0 15 12"><g fill="#eee"><rect x="0" y="10" width="2" height="2"/><rect x="3" y="8" width="2" height="4"/><rect x="6" y="6" width="2" height="6"/><rect x="9" y="3" width="2" height="9"/><rect x="12" y="0" width="2" height="12"/></g></svg>
<svg style="left:1129px;top:693px" width="14" height="15" viewBox="0 0 14 15"><path d="M1 5h3l4-4v13l-4-4H1z" fill="#e8e8e8"/><path d="M9.8 5a3.5 3.5 0 0 1 0 5M11.5 3a6 6 0 0 1 0 9" stroke="#bbb" stroke-width="1.1" fill="none"/></svg>
<svg style="left:1151px;top:692px" width="13" height="17" viewBox="0 0 13 17"><ellipse cx="6.5" cy="8.5" rx="6" ry="8.2" fill="#1a3f8a"/><path d="M3.5 5.5l6 5.5-3 2.5V3.5l3 2.5-6 5.5" stroke="#fff" stroke-width="1.3" fill="none"/></svg>
<svg style="left:1173px;top:693px" width="16" height="16" viewBox="0 0 16 16"><circle cx="7" cy="7.5" r="6.8" fill="#2ca5e0"/><path d="M2.8 7.3l7.5-3-1.3 6.3-2-1.5-1 1 .15-1.8 3-2.7-3.7 2.3z" fill="#fff"/><circle cx="11.5" cy="11.5" r="4" fill="#e53935"/><text x="11.5" y="14" font-size="6" font-family="Liberation Sans" font-weight="bold" fill="#fff" text-anchor="middle">1</text></svg>
<div class="tx" style="left:1219.5px;top:687.5px;font-size:11.5px;color:#f0f0f0">8:55</div>
<div class="tx" style="left:1204px;top:704px;font-size:11.5px;color:#f0f0f0;letter-spacing:-.55px">12.12.2025</div>
<div class="a" style="left:1268px;top:683px;width:12px;height:36px;border:1px solid #666;border-right:0;background:linear-gradient(90deg,#2a2a2a,#111)"></div>
</body></html>
